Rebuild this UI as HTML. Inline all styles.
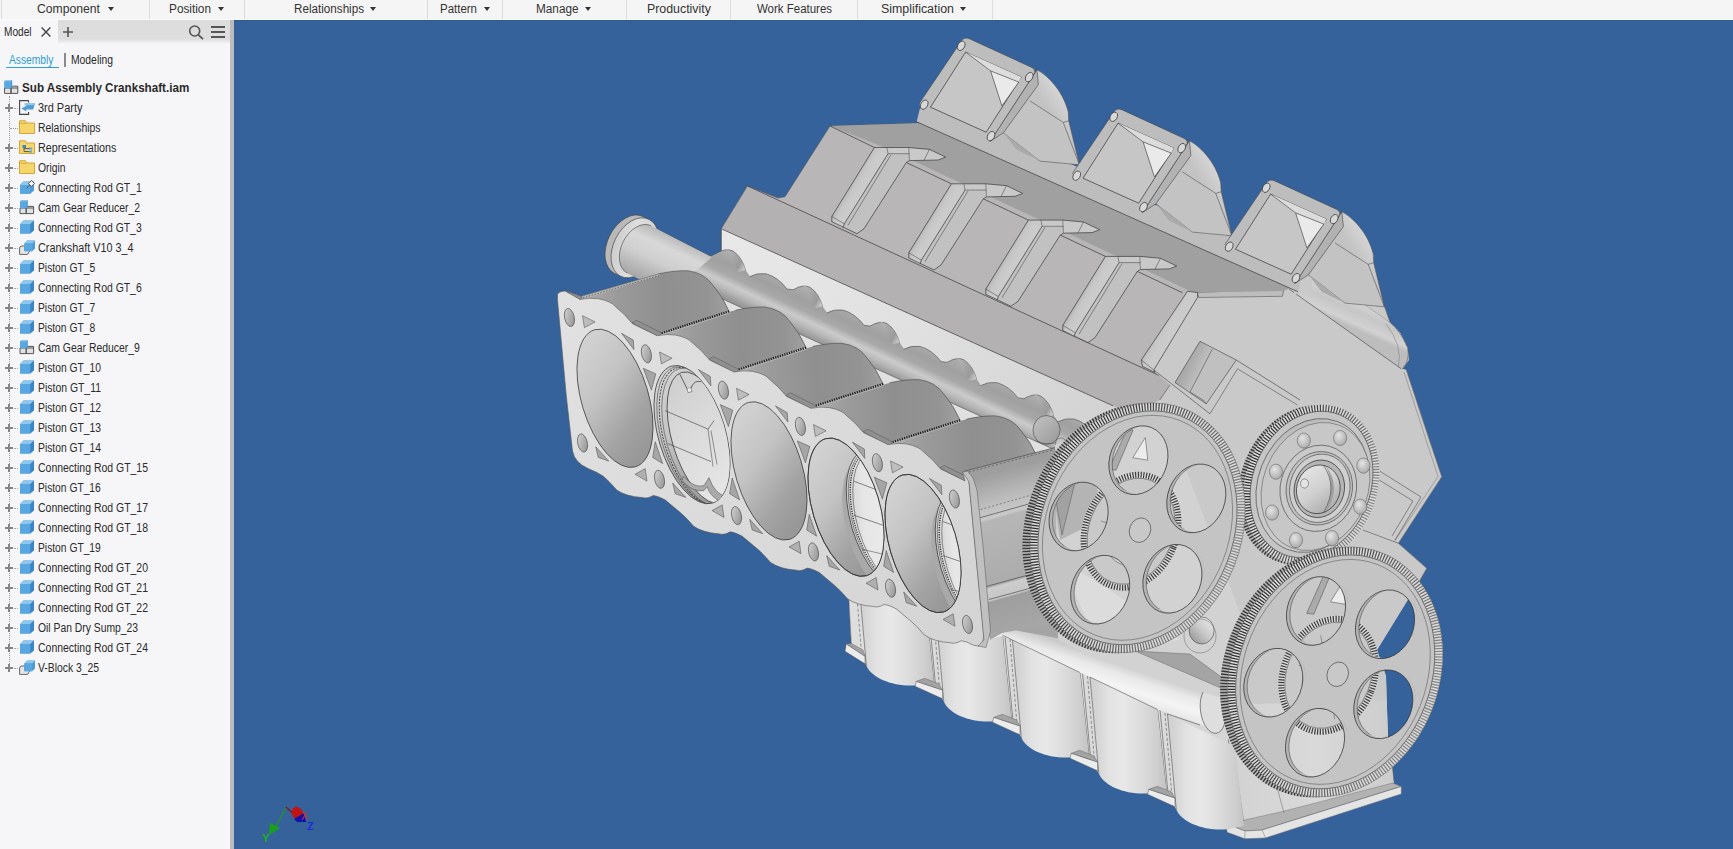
<!DOCTYPE html>
<html><head><meta charset="utf-8">
<style>
html,body{margin:0;padding:0;}
body{width:1733px;height:849px;overflow:hidden;position:relative;background:#35629b;font-family:"Liberation Sans",sans-serif;color:#2a2a2a;}
#ribbon{position:absolute;left:0;top:0;width:1733px;height:19px;background:#f5f5f5;border-bottom:1px solid #fbfbfb;}
#ribbon .t{position:absolute;top:1.5px;font-size:12px;line-height:14px;color:#333;white-space:nowrap;transform-origin:0 50%;}
#ribbon .s{position:absolute;top:0;width:1px;height:19px;background:#dcdcdc;}
#ribbon .a{position:absolute;top:7px;width:0;height:0;border-left:3.8px solid transparent;border-right:3.8px solid transparent;border-top:4.2px solid #333;}
#panel{position:absolute;left:0;top:20px;width:230px;height:829px;background:#f6f6f8;}
#split{position:absolute;left:230px;top:20px;width:4px;height:829px;background:#bdbbbb;}
#tabbar{position:absolute;left:0;top:0;width:230px;height:23px;background:linear-gradient(#dcdcdc 0,#dedede 19px,#f0f0f2 23px);}
#tabm{position:absolute;left:0;top:0;width:58px;height:24px;background:#f6f6f8;}
.b{font-weight:bold;color:#111;}
.lbl{position:absolute;white-space:nowrap;font-size:12px;line-height:14px;color:#2a2a2a;transform-origin:0 50%;}
#view{position:absolute;left:234px;top:20px;width:1499px;height:829px;overflow:hidden;box-shadow:inset 0 1px 0 #2f5b93;}
</style></head><body>
<div id="ribbon">
<div class="s" style="left:1px"></div><div class="s" style="left:149px"></div><div class="s" style="left:244px"></div><div class="s" style="left:427px"></div><div class="s" style="left:502px"></div><div class="s" style="left:626px"></div><div class="s" style="left:730px"></div><div class="s" style="left:857px"></div><div class="s" style="left:992px"></div>
<span class="t" id="r1" style="left:37px;transform:scaleX(1.015)">Component</span><i class="a" style="left:107.5px"></i>
<span class="t" id="r2" style="left:169px;transform:scaleX(0.984)">Position</span><i class="a" style="left:218px"></i>
<span class="t" id="r3" style="left:294px;transform:scaleX(0.972)">Relationships</span><i class="a" style="left:370px"></i>
<span class="t" id="r4" style="left:440px;transform:scaleX(0.956)">Pattern</span><i class="a" style="left:484px"></i>
<span class="t" id="r5" style="left:536px;transform:scaleX(0.982)">Manage</span><i class="a" style="left:585px"></i>
<span class="t" id="r6" style="left:647px;transform:scaleX(1.03)">Productivity</span>
<span class="t" id="r7" style="left:757px;transform:scaleX(0.956)">Work Features</span>
<span class="t" id="r8" style="left:881px;transform:scaleX(1.032)">Simplification</span><i class="a" style="left:960px"></i>
</div>
<div id="panel">
<div id="tabbar"></div><div id="tabm"></div>
<span class="lbl" id="pm" style="left:3.5px;top:5px;transform:scaleX(0.841)">Model</span>
<svg style="position:absolute;left:40px;top:6px" width="12" height="12" viewBox="0 0 12 12"><path d="M1.6 1.6L10.4 10.4M10.4 1.6L1.6 10.4" stroke="#444" stroke-width="1.4" fill="none"/></svg>
<svg style="position:absolute;left:62px;top:6px" width="12" height="12" viewBox="0 0 12 12"><path d="M6 1V11M1 6H11" stroke="#555" stroke-width="1.6" fill="none"/></svg>
<svg style="position:absolute;left:187px;top:3px" width="18" height="18" viewBox="0 0 18 18"><circle cx="7.7" cy="8" r="5" fill="none" stroke="#555" stroke-width="1.6"/><path d="M11.4 11.8L16 16.2" stroke="#555" stroke-width="1.8"/></svg>
<div style="position:absolute;left:211px;top:6px;width:14px;height:2px;background:#555"></div>
<div style="position:absolute;left:211px;top:11px;width:14px;height:2px;background:#555"></div>
<div style="position:absolute;left:211px;top:16px;width:14px;height:2px;background:#555"></div>
<span class="lbl" id="pa" style="left:9px;top:33px;color:#2d9fd3;transform:scaleX(0.852)">Assembly</span>
<div style="position:absolute;left:6px;top:47px;width:53px;height:1px;background:#2d9fd3"></div>
<div style="position:absolute;left:64px;top:33px;width:1.5px;height:14px;background:#8a8a8a"></div>
<span class="lbl" id="pmo" style="left:71.3px;top:33px;transform:scaleX(0.862)">Modeling</span>
<div style="position:absolute;left:9px;top:76px;width:0;height:568px;border-left:1px dotted #9a9a9a"></div>
<svg style="position:absolute;left:4px;top:60px" width="15" height="15" viewBox="0 0 15 15"><path d="M0.6 8H7V13.4H0.6Z M7 8H13.8V13.4H7Z M7 8 L8.4 6.2H13.8V8" fill="#e2e2e2" stroke="#555" stroke-width="1"/><path d="M0.4 1.4 L1.8 0H8.2V6.8L6.8 8.2H0.4Z" fill="#4e9bd6"/><path d="M0.4 1.4H6.8V8.2H0.4Z" fill="#5aa8e0"/><path d="M0.4 1.4L1.8 0H8.2L6.8 1.4Z" fill="#8ec6ee"/></svg>
<span class="lbl b" id="t0" style="left:22.2px;top:61px;transform:scaleX(0.9711)">Sub Assembly Crankshaft.iam</span>
<div style="position:absolute;left:5px;top:87px;width:8px;height:2px;background:#858585"></div><div style="position:absolute;left:8px;top:84px;width:2px;height:8px;background:#858585"></div>
<div style="position:absolute;left:14px;top:88px;width:4px;height:0;border-top:1px dotted #aaa"></div>
<svg style="position:absolute;left:19px;top:80px" width="17" height="15" viewBox="0 0 17 15"><path d="M9.6 0.6H0.6V14.4H9.6V12M9.6 0.6V2.6" fill="none" stroke="#444" stroke-width="1.1"/><path d="M5.5 3.4H16L14.2 9.6H7.2L7.4 11.6L2.4 8.6L7.8 5.6L7.6 7.4H8.2Z" fill="#4e9bd6"/><path d="M5.8 3.4H16L15.4 5.2H5.2Z" fill="#8ec6ee"/></svg>
<span class="lbl" id="t1" style="left:37.6px;top:81px;transform:scaleX(0.9119)">3rd Party</span>
<div style="position:absolute;left:10px;top:108px;width:8px;height:0;border-top:1px dotted #9a9a9a"></div>
<svg style="position:absolute;left:19px;top:100px" width="17" height="15" viewBox="0 0 17 15"><path d="M0.5 0.8H6.5L7.5 3H15.5V13.5H0.5Z" fill="#f6d56a" stroke="#d2a63a" stroke-width="1"/><path d="M0.5 3.4H7.5" stroke="#d2a63a" stroke-width="0.8" fill="none"/></svg>
<span class="lbl" id="t2" style="left:37.6px;top:101px;transform:scaleX(0.8675)">Relationships</span>
<div style="position:absolute;left:5px;top:127px;width:8px;height:2px;background:#858585"></div><div style="position:absolute;left:8px;top:124px;width:2px;height:8px;background:#858585"></div>
<div style="position:absolute;left:14px;top:128px;width:4px;height:0;border-top:1px dotted #aaa"></div>
<svg style="position:absolute;left:19px;top:120px" width="17" height="15" viewBox="0 0 17 15"><path d="M0.5 0.8H6.5L7.5 3H15.5V13.5H0.5Z" fill="#f6d56a" stroke="#d2a63a" stroke-width="1"/><rect x="3.5" y="5" width="3.5" height="3" fill="#3c86c8"/><rect x="10" y="7.6" width="3" height="2" fill="#5aa3dc"/><rect x="10" y="10.6" width="3" height="2" fill="#5aa3dc"/><path d="M5 8V11.6H10M5 8.6H10" stroke="#555" stroke-width="1" fill="none"/></svg>
<span class="lbl" id="t3" style="left:37.6px;top:121px;transform:scaleX(0.8983)">Representations</span>
<div style="position:absolute;left:5px;top:147px;width:8px;height:2px;background:#858585"></div><div style="position:absolute;left:8px;top:144px;width:2px;height:8px;background:#858585"></div>
<div style="position:absolute;left:14px;top:148px;width:4px;height:0;border-top:1px dotted #aaa"></div>
<svg style="position:absolute;left:19px;top:140px" width="17" height="15" viewBox="0 0 17 15"><path d="M0.5 0.8H6.5L7.5 3H15.5V13.5H0.5Z" fill="#f6d56a" stroke="#d2a63a" stroke-width="1"/><path d="M0.5 3.4H7.5" stroke="#d2a63a" stroke-width="0.8" fill="none"/></svg>
<span class="lbl" id="t4" style="left:37.6px;top:141px;transform:scaleX(0.8621)">Origin</span>
<div style="position:absolute;left:5px;top:167px;width:8px;height:2px;background:#858585"></div><div style="position:absolute;left:8px;top:164px;width:2px;height:8px;background:#858585"></div>
<div style="position:absolute;left:14px;top:168px;width:4px;height:0;border-top:1px dotted #aaa"></div>
<svg style="position:absolute;left:19px;top:160px" width="17" height="15" viewBox="0 0 17 15"><path d="M1 5 L4.4 1.6 L15 1.6 L15 10.4 L11.2 13.8 L1 13.8Z" fill="#4e9bd6"/><path d="M1 5 L4.4 1.6 L15 1.6 L11.2 5Z" fill="#8ec6ee"/><path d="M1 5H11.2V13.8H1Z" fill="#58a7e0"/><path d="M7.4 8.4 L10.6 5.2 M9.4 3.6 L12.4 0.4 L15.6 3.4 L12.6 6.6 Z" fill="#f4f4f4" stroke="#555" stroke-width="1"/></svg>
<span class="lbl" id="t5" style="left:37.6px;top:161px;transform:scaleX(0.8685)">Connecting Rod GT_1</span>
<div style="position:absolute;left:5px;top:187px;width:8px;height:2px;background:#858585"></div><div style="position:absolute;left:8px;top:184px;width:2px;height:8px;background:#858585"></div>
<div style="position:absolute;left:14px;top:188px;width:4px;height:0;border-top:1px dotted #aaa"></div>
<svg style="position:absolute;left:19px;top:180px" width="17" height="15" viewBox="0 0 17 15"><path d="M1 8H7.2V13.6H1Z M7.2 8 H14.6V13.6H7.2Z M7.2 8 L8.6 6.4 H14.6 V8" fill="#e2e2e2" stroke="#555" stroke-width="1"/><path d="M1 1.4 L2.4 0.2 H8.8 V7 L7.4 8.2 H1Z" fill="#4e9bd6"/><path d="M1 1.6H7.4V8.2H1Z" fill="#5aa8e0"/><path d="M1 1.6 L2.4 0.2H8.8L7.4 1.6Z" fill="#8ec6ee"/></svg>
<span class="lbl" id="t6" style="left:37.6px;top:181px;transform:scaleX(0.8697)">Cam Gear Reducer_2</span>
<div style="position:absolute;left:5px;top:207px;width:8px;height:2px;background:#858585"></div><div style="position:absolute;left:8px;top:204px;width:2px;height:8px;background:#858585"></div>
<div style="position:absolute;left:14px;top:208px;width:4px;height:0;border-top:1px dotted #aaa"></div>
<svg style="position:absolute;left:19px;top:200px" width="17" height="15" viewBox="0 0 17 15"><path d="M1 4.2 L4.6 0.6 L15 0.6 L15 10.2 L11.2 13.6 L1 13.6Z" fill="#4e9bd6"/><path d="M1 4.2 L4.6 0.6 L15 0.6 L11.2 4.2Z" fill="#8ec6ee"/><path d="M11.2 4.2 L15 0.6 L15 10.2 L11.2 13.6Z" fill="#3985c6"/><path d="M1 4.2H11.2V13.6H1Z" fill="#58a7e0"/></svg>
<span class="lbl" id="t7" style="left:37.6px;top:201px;transform:scaleX(0.8685)">Connecting Rod GT_3</span>
<div style="position:absolute;left:5px;top:227px;width:8px;height:2px;background:#858585"></div><div style="position:absolute;left:8px;top:224px;width:2px;height:8px;background:#858585"></div>
<div style="position:absolute;left:14px;top:228px;width:4px;height:0;border-top:1px dotted #aaa"></div>
<svg style="position:absolute;left:19px;top:220px" width="17" height="15" viewBox="0 0 17 15"><path d="M0.6 8.2 Q0.6 6 3 6 H6 V10.5 H11 L8.6 14.4 H0.6Z" fill="#e6e6e6" stroke="#666" stroke-width="1"/><path d="M5.4 3.4 L8.2 0.6 L16 0.6 L16 8.4 L13.2 11.2 L5.4 11.2Z" fill="#4e9bd6"/><path d="M5.4 3.4 L8.2 0.6 L16 0.6 L13.2 3.4Z" fill="#8ec6ee"/><path d="M5.4 3.4H13.2V11.2H5.4Z" fill="#58a7e0"/></svg>
<span class="lbl" id="t8" style="left:37.6px;top:221px;transform:scaleX(0.8993)">Crankshaft V10 3_4</span>
<div style="position:absolute;left:5px;top:247px;width:8px;height:2px;background:#858585"></div><div style="position:absolute;left:8px;top:244px;width:2px;height:8px;background:#858585"></div>
<div style="position:absolute;left:14px;top:248px;width:4px;height:0;border-top:1px dotted #aaa"></div>
<svg style="position:absolute;left:19px;top:240px" width="17" height="15" viewBox="0 0 17 15"><path d="M1 4.2 L4.6 0.6 L15 0.6 L15 10.2 L11.2 13.6 L1 13.6Z" fill="#4e9bd6"/><path d="M1 4.2 L4.6 0.6 L15 0.6 L11.2 4.2Z" fill="#8ec6ee"/><path d="M11.2 4.2 L15 0.6 L15 10.2 L11.2 13.6Z" fill="#3985c6"/><path d="M1 4.2H11.2V13.6H1Z" fill="#58a7e0"/></svg>
<span class="lbl" id="t9" style="left:37.6px;top:241px;transform:scaleX(0.8560)">Piston GT_5</span>
<div style="position:absolute;left:5px;top:267px;width:8px;height:2px;background:#858585"></div><div style="position:absolute;left:8px;top:264px;width:2px;height:8px;background:#858585"></div>
<div style="position:absolute;left:14px;top:268px;width:4px;height:0;border-top:1px dotted #aaa"></div>
<svg style="position:absolute;left:19px;top:260px" width="17" height="15" viewBox="0 0 17 15"><path d="M1 4.2 L4.6 0.6 L15 0.6 L15 10.2 L11.2 13.6 L1 13.6Z" fill="#4e9bd6"/><path d="M1 4.2 L4.6 0.6 L15 0.6 L11.2 4.2Z" fill="#8ec6ee"/><path d="M11.2 4.2 L15 0.6 L15 10.2 L11.2 13.6Z" fill="#3985c6"/><path d="M1 4.2H11.2V13.6H1Z" fill="#58a7e0"/></svg>
<span class="lbl" id="t10" style="left:37.6px;top:261px;transform:scaleX(0.8685)">Connecting Rod GT_6</span>
<div style="position:absolute;left:5px;top:287px;width:8px;height:2px;background:#858585"></div><div style="position:absolute;left:8px;top:284px;width:2px;height:8px;background:#858585"></div>
<div style="position:absolute;left:14px;top:288px;width:4px;height:0;border-top:1px dotted #aaa"></div>
<svg style="position:absolute;left:19px;top:280px" width="17" height="15" viewBox="0 0 17 15"><path d="M1 4.2 L4.6 0.6 L15 0.6 L15 10.2 L11.2 13.6 L1 13.6Z" fill="#4e9bd6"/><path d="M1 4.2 L4.6 0.6 L15 0.6 L11.2 4.2Z" fill="#8ec6ee"/><path d="M11.2 4.2 L15 0.6 L15 10.2 L11.2 13.6Z" fill="#3985c6"/><path d="M1 4.2H11.2V13.6H1Z" fill="#58a7e0"/></svg>
<span class="lbl" id="t11" style="left:37.6px;top:281px;transform:scaleX(0.8560)">Piston GT_7</span>
<div style="position:absolute;left:5px;top:307px;width:8px;height:2px;background:#858585"></div><div style="position:absolute;left:8px;top:304px;width:2px;height:8px;background:#858585"></div>
<div style="position:absolute;left:14px;top:308px;width:4px;height:0;border-top:1px dotted #aaa"></div>
<svg style="position:absolute;left:19px;top:300px" width="17" height="15" viewBox="0 0 17 15"><path d="M1 4.2 L4.6 0.6 L15 0.6 L15 10.2 L11.2 13.6 L1 13.6Z" fill="#4e9bd6"/><path d="M1 4.2 L4.6 0.6 L15 0.6 L11.2 4.2Z" fill="#8ec6ee"/><path d="M11.2 4.2 L15 0.6 L15 10.2 L11.2 13.6Z" fill="#3985c6"/><path d="M1 4.2H11.2V13.6H1Z" fill="#58a7e0"/></svg>
<span class="lbl" id="t12" style="left:37.6px;top:301px;transform:scaleX(0.8560)">Piston GT_8</span>
<div style="position:absolute;left:5px;top:327px;width:8px;height:2px;background:#858585"></div><div style="position:absolute;left:8px;top:324px;width:2px;height:8px;background:#858585"></div>
<div style="position:absolute;left:14px;top:328px;width:4px;height:0;border-top:1px dotted #aaa"></div>
<svg style="position:absolute;left:19px;top:320px" width="17" height="15" viewBox="0 0 17 15"><path d="M1 8H7.2V13.6H1Z M7.2 8 H14.6V13.6H7.2Z M7.2 8 L8.6 6.4 H14.6 V8" fill="#e2e2e2" stroke="#555" stroke-width="1"/><path d="M1 1.4 L2.4 0.2 H8.8 V7 L7.4 8.2 H1Z" fill="#4e9bd6"/><path d="M1 1.6H7.4V8.2H1Z" fill="#5aa8e0"/><path d="M1 1.6 L2.4 0.2H8.8L7.4 1.6Z" fill="#8ec6ee"/></svg>
<span class="lbl" id="t13" style="left:37.6px;top:321px;transform:scaleX(0.8672)">Cam Gear Reducer_9</span>
<div style="position:absolute;left:5px;top:347px;width:8px;height:2px;background:#858585"></div><div style="position:absolute;left:8px;top:344px;width:2px;height:8px;background:#858585"></div>
<div style="position:absolute;left:14px;top:348px;width:4px;height:0;border-top:1px dotted #aaa"></div>
<svg style="position:absolute;left:19px;top:340px" width="17" height="15" viewBox="0 0 17 15"><path d="M1 4.2 L4.6 0.6 L15 0.6 L15 10.2 L11.2 13.6 L1 13.6Z" fill="#4e9bd6"/><path d="M1 4.2 L4.6 0.6 L15 0.6 L11.2 4.2Z" fill="#8ec6ee"/><path d="M11.2 4.2 L15 0.6 L15 10.2 L11.2 13.6Z" fill="#3985c6"/><path d="M1 4.2H11.2V13.6H1Z" fill="#58a7e0"/></svg>
<span class="lbl" id="t14" style="left:37.6px;top:341px;transform:scaleX(0.8586)">Piston GT_10</span>
<div style="position:absolute;left:5px;top:367px;width:8px;height:2px;background:#858585"></div><div style="position:absolute;left:8px;top:364px;width:2px;height:8px;background:#858585"></div>
<div style="position:absolute;left:14px;top:368px;width:4px;height:0;border-top:1px dotted #aaa"></div>
<svg style="position:absolute;left:19px;top:360px" width="17" height="15" viewBox="0 0 17 15"><path d="M1 4.2 L4.6 0.6 L15 0.6 L15 10.2 L11.2 13.6 L1 13.6Z" fill="#4e9bd6"/><path d="M1 4.2 L4.6 0.6 L15 0.6 L11.2 4.2Z" fill="#8ec6ee"/><path d="M11.2 4.2 L15 0.6 L15 10.2 L11.2 13.6Z" fill="#3985c6"/><path d="M1 4.2H11.2V13.6H1Z" fill="#58a7e0"/></svg>
<span class="lbl" id="t15" style="left:37.6px;top:361px;transform:scaleX(0.8692)">Piston GT_11</span>
<div style="position:absolute;left:5px;top:387px;width:8px;height:2px;background:#858585"></div><div style="position:absolute;left:8px;top:384px;width:2px;height:8px;background:#858585"></div>
<div style="position:absolute;left:14px;top:388px;width:4px;height:0;border-top:1px dotted #aaa"></div>
<svg style="position:absolute;left:19px;top:380px" width="17" height="15" viewBox="0 0 17 15"><path d="M1 4.2 L4.6 0.6 L15 0.6 L15 10.2 L11.2 13.6 L1 13.6Z" fill="#4e9bd6"/><path d="M1 4.2 L4.6 0.6 L15 0.6 L11.2 4.2Z" fill="#8ec6ee"/><path d="M11.2 4.2 L15 0.6 L15 10.2 L11.2 13.6Z" fill="#3985c6"/><path d="M1 4.2H11.2V13.6H1Z" fill="#58a7e0"/></svg>
<span class="lbl" id="t16" style="left:37.6px;top:381px;transform:scaleX(0.8600)">Piston GT_12</span>
<div style="position:absolute;left:5px;top:407px;width:8px;height:2px;background:#858585"></div><div style="position:absolute;left:8px;top:404px;width:2px;height:8px;background:#858585"></div>
<div style="position:absolute;left:14px;top:408px;width:4px;height:0;border-top:1px dotted #aaa"></div>
<svg style="position:absolute;left:19px;top:400px" width="17" height="15" viewBox="0 0 17 15"><path d="M1 4.2 L4.6 0.6 L15 0.6 L15 10.2 L11.2 13.6 L1 13.6Z" fill="#4e9bd6"/><path d="M1 4.2 L4.6 0.6 L15 0.6 L11.2 4.2Z" fill="#8ec6ee"/><path d="M11.2 4.2 L15 0.6 L15 10.2 L11.2 13.6Z" fill="#3985c6"/><path d="M1 4.2H11.2V13.6H1Z" fill="#58a7e0"/></svg>
<span class="lbl" id="t17" style="left:37.6px;top:401px;transform:scaleX(0.8586)">Piston GT_13</span>
<div style="position:absolute;left:5px;top:427px;width:8px;height:2px;background:#858585"></div><div style="position:absolute;left:8px;top:424px;width:2px;height:8px;background:#858585"></div>
<div style="position:absolute;left:14px;top:428px;width:4px;height:0;border-top:1px dotted #aaa"></div>
<svg style="position:absolute;left:19px;top:420px" width="17" height="15" viewBox="0 0 17 15"><path d="M1 4.2 L4.6 0.6 L15 0.6 L15 10.2 L11.2 13.6 L1 13.6Z" fill="#4e9bd6"/><path d="M1 4.2 L4.6 0.6 L15 0.6 L11.2 4.2Z" fill="#8ec6ee"/><path d="M11.2 4.2 L15 0.6 L15 10.2 L11.2 13.6Z" fill="#3985c6"/><path d="M1 4.2H11.2V13.6H1Z" fill="#58a7e0"/></svg>
<span class="lbl" id="t18" style="left:37.6px;top:421px;transform:scaleX(0.8600)">Piston GT_14</span>
<div style="position:absolute;left:5px;top:447px;width:8px;height:2px;background:#858585"></div><div style="position:absolute;left:8px;top:444px;width:2px;height:8px;background:#858585"></div>
<div style="position:absolute;left:14px;top:448px;width:4px;height:0;border-top:1px dotted #aaa"></div>
<svg style="position:absolute;left:19px;top:440px" width="17" height="15" viewBox="0 0 17 15"><path d="M1 4.2 L4.6 0.6 L15 0.6 L15 10.2 L11.2 13.6 L1 13.6Z" fill="#4e9bd6"/><path d="M1 4.2 L4.6 0.6 L15 0.6 L11.2 4.2Z" fill="#8ec6ee"/><path d="M11.2 4.2 L15 0.6 L15 10.2 L11.2 13.6Z" fill="#3985c6"/><path d="M1 4.2H11.2V13.6H1Z" fill="#58a7e0"/></svg>
<span class="lbl" id="t19" style="left:37.6px;top:441px;transform:scaleX(0.8725)">Connecting Rod GT_15</span>
<div style="position:absolute;left:5px;top:467px;width:8px;height:2px;background:#858585"></div><div style="position:absolute;left:8px;top:464px;width:2px;height:8px;background:#858585"></div>
<div style="position:absolute;left:14px;top:468px;width:4px;height:0;border-top:1px dotted #aaa"></div>
<svg style="position:absolute;left:19px;top:460px" width="17" height="15" viewBox="0 0 17 15"><path d="M1 4.2 L4.6 0.6 L15 0.6 L15 10.2 L11.2 13.6 L1 13.6Z" fill="#4e9bd6"/><path d="M1 4.2 L4.6 0.6 L15 0.6 L11.2 4.2Z" fill="#8ec6ee"/><path d="M11.2 4.2 L15 0.6 L15 10.2 L11.2 13.6Z" fill="#3985c6"/><path d="M1 4.2H11.2V13.6H1Z" fill="#58a7e0"/></svg>
<span class="lbl" id="t20" style="left:37.6px;top:461px;transform:scaleX(0.8559)">Piston GT_16</span>
<div style="position:absolute;left:5px;top:487px;width:8px;height:2px;background:#858585"></div><div style="position:absolute;left:8px;top:484px;width:2px;height:8px;background:#858585"></div>
<div style="position:absolute;left:14px;top:488px;width:4px;height:0;border-top:1px dotted #aaa"></div>
<svg style="position:absolute;left:19px;top:480px" width="17" height="15" viewBox="0 0 17 15"><path d="M1 4.2 L4.6 0.6 L15 0.6 L15 10.2 L11.2 13.6 L1 13.6Z" fill="#4e9bd6"/><path d="M1 4.2 L4.6 0.6 L15 0.6 L11.2 4.2Z" fill="#8ec6ee"/><path d="M11.2 4.2 L15 0.6 L15 10.2 L11.2 13.6Z" fill="#3985c6"/><path d="M1 4.2H11.2V13.6H1Z" fill="#58a7e0"/></svg>
<span class="lbl" id="t21" style="left:37.6px;top:481px;transform:scaleX(0.8725)">Connecting Rod GT_17</span>
<div style="position:absolute;left:5px;top:507px;width:8px;height:2px;background:#858585"></div><div style="position:absolute;left:8px;top:504px;width:2px;height:8px;background:#858585"></div>
<div style="position:absolute;left:14px;top:508px;width:4px;height:0;border-top:1px dotted #aaa"></div>
<svg style="position:absolute;left:19px;top:500px" width="17" height="15" viewBox="0 0 17 15"><path d="M1 4.2 L4.6 0.6 L15 0.6 L15 10.2 L11.2 13.6 L1 13.6Z" fill="#4e9bd6"/><path d="M1 4.2 L4.6 0.6 L15 0.6 L11.2 4.2Z" fill="#8ec6ee"/><path d="M11.2 4.2 L15 0.6 L15 10.2 L11.2 13.6Z" fill="#3985c6"/><path d="M1 4.2H11.2V13.6H1Z" fill="#58a7e0"/></svg>
<span class="lbl" id="t22" style="left:37.6px;top:501px;transform:scaleX(0.8725)">Connecting Rod GT_18</span>
<div style="position:absolute;left:5px;top:527px;width:8px;height:2px;background:#858585"></div><div style="position:absolute;left:8px;top:524px;width:2px;height:8px;background:#858585"></div>
<div style="position:absolute;left:14px;top:528px;width:4px;height:0;border-top:1px dotted #aaa"></div>
<svg style="position:absolute;left:19px;top:520px" width="17" height="15" viewBox="0 0 17 15"><path d="M1 4.2 L4.6 0.6 L15 0.6 L15 10.2 L11.2 13.6 L1 13.6Z" fill="#4e9bd6"/><path d="M1 4.2 L4.6 0.6 L15 0.6 L11.2 4.2Z" fill="#8ec6ee"/><path d="M11.2 4.2 L15 0.6 L15 10.2 L11.2 13.6Z" fill="#3985c6"/><path d="M1 4.2H11.2V13.6H1Z" fill="#58a7e0"/></svg>
<span class="lbl" id="t23" style="left:37.6px;top:521px;transform:scaleX(0.8559)">Piston GT_19</span>
<div style="position:absolute;left:5px;top:547px;width:8px;height:2px;background:#858585"></div><div style="position:absolute;left:8px;top:544px;width:2px;height:8px;background:#858585"></div>
<div style="position:absolute;left:14px;top:548px;width:4px;height:0;border-top:1px dotted #aaa"></div>
<svg style="position:absolute;left:19px;top:540px" width="17" height="15" viewBox="0 0 17 15"><path d="M1 4.2 L4.6 0.6 L15 0.6 L15 10.2 L11.2 13.6 L1 13.6Z" fill="#4e9bd6"/><path d="M1 4.2 L4.6 0.6 L15 0.6 L11.2 4.2Z" fill="#8ec6ee"/><path d="M11.2 4.2 L15 0.6 L15 10.2 L11.2 13.6Z" fill="#3985c6"/><path d="M1 4.2H11.2V13.6H1Z" fill="#58a7e0"/></svg>
<span class="lbl" id="t24" style="left:37.6px;top:541px;transform:scaleX(0.8725)">Connecting Rod GT_20</span>
<div style="position:absolute;left:5px;top:567px;width:8px;height:2px;background:#858585"></div><div style="position:absolute;left:8px;top:564px;width:2px;height:8px;background:#858585"></div>
<div style="position:absolute;left:14px;top:568px;width:4px;height:0;border-top:1px dotted #aaa"></div>
<svg style="position:absolute;left:19px;top:560px" width="17" height="15" viewBox="0 0 17 15"><path d="M1 4.2 L4.6 0.6 L15 0.6 L15 10.2 L11.2 13.6 L1 13.6Z" fill="#4e9bd6"/><path d="M1 4.2 L4.6 0.6 L15 0.6 L11.2 4.2Z" fill="#8ec6ee"/><path d="M11.2 4.2 L15 0.6 L15 10.2 L11.2 13.6Z" fill="#3985c6"/><path d="M1 4.2H11.2V13.6H1Z" fill="#58a7e0"/></svg>
<span class="lbl" id="t25" style="left:37.6px;top:561px;transform:scaleX(0.8725)">Connecting Rod GT_21</span>
<div style="position:absolute;left:5px;top:587px;width:8px;height:2px;background:#858585"></div><div style="position:absolute;left:8px;top:584px;width:2px;height:8px;background:#858585"></div>
<div style="position:absolute;left:14px;top:588px;width:4px;height:0;border-top:1px dotted #aaa"></div>
<svg style="position:absolute;left:19px;top:580px" width="17" height="15" viewBox="0 0 17 15"><path d="M1 4.2 L4.6 0.6 L15 0.6 L15 10.2 L11.2 13.6 L1 13.6Z" fill="#4e9bd6"/><path d="M1 4.2 L4.6 0.6 L15 0.6 L11.2 4.2Z" fill="#8ec6ee"/><path d="M11.2 4.2 L15 0.6 L15 10.2 L11.2 13.6Z" fill="#3985c6"/><path d="M1 4.2H11.2V13.6H1Z" fill="#58a7e0"/></svg>
<span class="lbl" id="t26" style="left:37.6px;top:581px;transform:scaleX(0.8725)">Connecting Rod GT_22</span>
<div style="position:absolute;left:5px;top:607px;width:8px;height:2px;background:#858585"></div><div style="position:absolute;left:8px;top:604px;width:2px;height:8px;background:#858585"></div>
<div style="position:absolute;left:14px;top:608px;width:4px;height:0;border-top:1px dotted #aaa"></div>
<svg style="position:absolute;left:19px;top:600px" width="17" height="15" viewBox="0 0 17 15"><path d="M1 4.2 L4.6 0.6 L15 0.6 L15 10.2 L11.2 13.6 L1 13.6Z" fill="#4e9bd6"/><path d="M1 4.2 L4.6 0.6 L15 0.6 L11.2 4.2Z" fill="#8ec6ee"/><path d="M11.2 4.2 L15 0.6 L15 10.2 L11.2 13.6Z" fill="#3985c6"/><path d="M1 4.2H11.2V13.6H1Z" fill="#58a7e0"/></svg>
<span class="lbl" id="t27" style="left:37.6px;top:601px;transform:scaleX(0.8625)">Oil Pan Dry Sump_23</span>
<div style="position:absolute;left:5px;top:627px;width:8px;height:2px;background:#858585"></div><div style="position:absolute;left:8px;top:624px;width:2px;height:8px;background:#858585"></div>
<div style="position:absolute;left:14px;top:628px;width:4px;height:0;border-top:1px dotted #aaa"></div>
<svg style="position:absolute;left:19px;top:620px" width="17" height="15" viewBox="0 0 17 15"><path d="M1 4.2 L4.6 0.6 L15 0.6 L15 10.2 L11.2 13.6 L1 13.6Z" fill="#4e9bd6"/><path d="M1 4.2 L4.6 0.6 L15 0.6 L11.2 4.2Z" fill="#8ec6ee"/><path d="M11.2 4.2 L15 0.6 L15 10.2 L11.2 13.6Z" fill="#3985c6"/><path d="M1 4.2H11.2V13.6H1Z" fill="#58a7e0"/></svg>
<span class="lbl" id="t28" style="left:37.6px;top:621px;transform:scaleX(0.8725)">Connecting Rod GT_24</span>
<div style="position:absolute;left:5px;top:647px;width:8px;height:2px;background:#858585"></div><div style="position:absolute;left:8px;top:644px;width:2px;height:8px;background:#858585"></div>
<div style="position:absolute;left:14px;top:648px;width:4px;height:0;border-top:1px dotted #aaa"></div>
<svg style="position:absolute;left:19px;top:640px" width="17" height="15" viewBox="0 0 17 15"><path d="M0.6 8.2 Q0.6 6 3 6 H6 V10.5 H11 L8.6 14.4 H0.6Z" fill="#e6e6e6" stroke="#666" stroke-width="1"/><path d="M5.4 3.4 L8.2 0.6 L16 0.6 L16 8.4 L13.2 11.2 L5.4 11.2Z" fill="#4e9bd6"/><path d="M5.4 3.4 L8.2 0.6 L16 0.6 L13.2 3.4Z" fill="#8ec6ee"/><path d="M5.4 3.4H13.2V11.2H5.4Z" fill="#58a7e0"/></svg>
<span class="lbl" id="t29" style="left:37.6px;top:641px;transform:scaleX(0.8640)">V-Block 3_25</span>
</div>
<div id="split"></div>
<div id="view">
<svg style="position:absolute;left:0;top:0" width="1499" height="829" viewBox="234 20 1499 829" shape-rendering="geometricPrecision"><defs><linearGradient id="lstrip" gradientUnits="userSpaceOnUse" x1="721" y1="240" x2="1110" y2="420"><stop offset="0" stop-color="#e8e8e8"/><stop offset="0.5" stop-color="#e0e0e0"/><stop offset="1" stop-color="#d2d2d2"/></linearGradient><linearGradient id="rdg" gradientUnits="userSpaceOnUse" x1="1345" y1="285" x2="1330" y2="318"><stop offset="0" stop-color="#b9b9b9"/><stop offset="0.2" stop-color="#d6d6d6"/><stop offset="0.55" stop-color="#c6c6c6"/><stop offset="0.85" stop-color="#d2d2d2"/><stop offset="1" stop-color="#bdbdbd"/></linearGradient><linearGradient id="pkt" gradientUnits="userSpaceOnUse" x1="1190" y1="360" x2="1215" y2="372"><stop offset="0" stop-color="#a9a9a9"/><stop offset="0.5" stop-color="#bdbdbd"/><stop offset="1" stop-color="#c6c6c6"/></linearGradient><linearGradient id="slw1" gradientUnits="userSpaceOnUse" x1="844.4" y1="187.5" x2="856.4" y2="194.5"><stop offset="0" stop-color="#a8a8a8"/><stop offset="0.6" stop-color="#c6c6c6"/><stop offset="1" stop-color="#cbcbcb"/></linearGradient><linearGradient id="slw2" gradientUnits="userSpaceOnUse" x1="921.4" y1="223.8" x2="933.4" y2="230.8"><stop offset="0" stop-color="#a8a8a8"/><stop offset="0.6" stop-color="#c6c6c6"/><stop offset="1" stop-color="#cbcbcb"/></linearGradient><linearGradient id="slw3" gradientUnits="userSpaceOnUse" x1="998.4000000000001" y1="260.1" x2="1010.4000000000001" y2="267.1"><stop offset="0" stop-color="#a8a8a8"/><stop offset="0.6" stop-color="#c6c6c6"/><stop offset="1" stop-color="#cbcbcb"/></linearGradient><linearGradient id="slw4" gradientUnits="userSpaceOnUse" x1="1075.4" y1="296.4" x2="1087.4" y2="303.4"><stop offset="0" stop-color="#a8a8a8"/><stop offset="0.6" stop-color="#c6c6c6"/><stop offset="1" stop-color="#cbcbcb"/></linearGradient><linearGradient id="slw5" gradientUnits="userSpaceOnUse" x1="1160" y1="318" x2="1172" y2="325"><stop offset="0" stop-color="#a8a8a8"/><stop offset="0.6" stop-color="#c6c6c6"/><stop offset="1" stop-color="#cbcbcb"/></linearGradient><linearGradient id="rn1" gradientUnits="userSpaceOnUse" x1="1041.9" y1="99.8" x2="1068.9" y2="81.8"><stop offset="0" stop-color="#c3c3c3"/><stop offset="0.55" stop-color="#d4d4d4"/><stop offset="1" stop-color="#b8b8b8"/></linearGradient><linearGradient id="rn2" gradientUnits="userSpaceOnUse" x1="1194.4" y1="170.8" x2="1221.4" y2="152.8"><stop offset="0" stop-color="#c3c3c3"/><stop offset="0.55" stop-color="#d4d4d4"/><stop offset="1" stop-color="#b8b8b8"/></linearGradient><linearGradient id="rn3" gradientUnits="userSpaceOnUse" x1="1346.9" y1="241.8" x2="1373.9" y2="223.8"><stop offset="0" stop-color="#c3c3c3"/><stop offset="0.55" stop-color="#d4d4d4"/><stop offset="1" stop-color="#b8b8b8"/></linearGradient><linearGradient id="tubeg" gradientUnits="userSpaceOnUse" x1="704.3" y1="241" x2="684.7" y2="282.6"><stop offset="0" stop-color="#acacac"/><stop offset="0.25" stop-color="#a0a0a0"/><stop offset="0.45" stop-color="#a8a8a8"/><stop offset="0.62" stop-color="#cbcbcb"/><stop offset="0.75" stop-color="#b9b9b9"/><stop offset="0.9" stop-color="#9b9b9b"/><stop offset="1" stop-color="#8e8e8e"/></linearGradient><linearGradient id="pst0" gradientUnits="userSpaceOnUse" x1="728.0" y1="255.0" x2="746.0" y2="266.0"><stop offset="0" stop-color="#b0b0b0"/><stop offset="0.7" stop-color="#9a9a9a"/><stop offset="1" stop-color="#c8c8c8"/></linearGradient><linearGradient id="pst1" gradientUnits="userSpaceOnUse" x1="805.0" y1="291.3" x2="823.0" y2="302.3"><stop offset="0" stop-color="#b0b0b0"/><stop offset="0.7" stop-color="#9a9a9a"/><stop offset="1" stop-color="#c8c8c8"/></linearGradient><linearGradient id="pst2" gradientUnits="userSpaceOnUse" x1="882.0" y1="327.6" x2="900.0" y2="338.6"><stop offset="0" stop-color="#b0b0b0"/><stop offset="0.7" stop-color="#9a9a9a"/><stop offset="1" stop-color="#c8c8c8"/></linearGradient><linearGradient id="pst3" gradientUnits="userSpaceOnUse" x1="959.0" y1="363.9" x2="977.0" y2="374.9"><stop offset="0" stop-color="#b0b0b0"/><stop offset="0.7" stop-color="#9a9a9a"/><stop offset="1" stop-color="#c8c8c8"/></linearGradient><linearGradient id="pst4" gradientUnits="userSpaceOnUse" x1="1036.0" y1="400.2" x2="1054.0" y2="411.2"><stop offset="0" stop-color="#b0b0b0"/><stop offset="0.7" stop-color="#9a9a9a"/><stop offset="1" stop-color="#c8c8c8"/></linearGradient><linearGradient id="cend" gradientUnits="userSpaceOnUse" x1="1036" y1="420" x2="1058" y2="442"><stop offset="0" stop-color="#bdbdbd"/><stop offset="0.6" stop-color="#a9a9a9"/><stop offset="1" stop-color="#9a9a9a"/></linearGradient><linearGradient id="flg" gradientUnits="userSpaceOnUse" x1="606" y1="250" x2="655" y2="238"><stop offset="0" stop-color="#c6c6c6"/><stop offset="0.5" stop-color="#dedede"/><stop offset="1" stop-color="#d0d0d0"/></linearGradient><linearGradient id="tube2" gradientUnits="userSpaceOnUse" x1="655" y1="224" x2="630" y2="278"><stop offset="0" stop-color="#b0b0b0"/><stop offset="0.28" stop-color="#d8d8d8"/><stop offset="0.55" stop-color="#cfcfcf"/><stop offset="1" stop-color="#a0a0a0"/></linearGradient><linearGradient id="pfw" gradientUnits="userSpaceOnUse" x1="1230" y1="760" x2="1400" y2="760"><stop offset="0" stop-color="#d2d2d2"/><stop offset="0.5" stop-color="#d9d9d9"/><stop offset="1" stop-color="#cbcbcb"/></linearGradient><linearGradient id="pc1" gradientUnits="userSpaceOnUse" x1="862.3" y1="635.5" x2="933.8" y2="635.5"><stop offset="0" stop-color="#d2d2d2"/><stop offset="0.2" stop-color="#e2e2e2"/><stop offset="0.4" stop-color="#e8e8e8"/><stop offset="0.65" stop-color="#dcdcdc"/><stop offset="0.88" stop-color="#cecece"/><stop offset="1" stop-color="#c3c3c3"/></linearGradient><linearGradient id="pc2" gradientUnits="userSpaceOnUse" x1="939.8" y1="671.5" x2="1011.3" y2="671.5"><stop offset="0" stop-color="#d2d2d2"/><stop offset="0.2" stop-color="#e2e2e2"/><stop offset="0.4" stop-color="#e8e8e8"/><stop offset="0.65" stop-color="#dcdcdc"/><stop offset="0.88" stop-color="#cecece"/><stop offset="1" stop-color="#c3c3c3"/></linearGradient><linearGradient id="pc3" gradientUnits="userSpaceOnUse" x1="1017.3" y1="707.5" x2="1088.8" y2="707.5"><stop offset="0" stop-color="#d2d2d2"/><stop offset="0.2" stop-color="#e2e2e2"/><stop offset="0.4" stop-color="#e8e8e8"/><stop offset="0.65" stop-color="#dcdcdc"/><stop offset="0.88" stop-color="#cecece"/><stop offset="1" stop-color="#c3c3c3"/></linearGradient><linearGradient id="pc4" gradientUnits="userSpaceOnUse" x1="1094.8" y1="743.5" x2="1166.3" y2="743.5"><stop offset="0" stop-color="#d2d2d2"/><stop offset="0.2" stop-color="#e2e2e2"/><stop offset="0.4" stop-color="#e8e8e8"/><stop offset="0.65" stop-color="#dcdcdc"/><stop offset="0.88" stop-color="#cecece"/><stop offset="1" stop-color="#c3c3c3"/></linearGradient><linearGradient id="pc5" gradientUnits="userSpaceOnUse" x1="1172.3" y1="779.5" x2="1243.8" y2="779.5"><stop offset="0" stop-color="#d2d2d2"/><stop offset="0.2" stop-color="#e2e2e2"/><stop offset="0.4" stop-color="#e8e8e8"/><stop offset="0.65" stop-color="#dcdcdc"/><stop offset="0.88" stop-color="#cecece"/><stop offset="1" stop-color="#c3c3c3"/></linearGradient><linearGradient id="prt" gradientUnits="userSpaceOnUse" x1="1100" y1="655" x2="1085" y2="700"><stop offset="0" stop-color="#c9c9c9"/><stop offset="0.25" stop-color="#e9e9e9"/><stop offset="0.5" stop-color="#f4f4f4"/><stop offset="0.8" stop-color="#e2e2e2"/><stop offset="1" stop-color="#cdcdcd"/></linearGradient><linearGradient id="sd1" gradientUnits="userSpaceOnUse" x1="581.3" y1="306.3" x2="729.1" y2="301.3"><stop offset="0" stop-color="#aeaeae"/><stop offset="0.25" stop-color="#9a9a9a"/><stop offset="0.55" stop-color="#8f8f8f"/><stop offset="0.85" stop-color="#939393"/><stop offset="1" stop-color="#a0a0a0"/></linearGradient><linearGradient id="sd2" gradientUnits="userSpaceOnUse" x1="658.3" y1="342.6" x2="806.1" y2="337.6"><stop offset="0" stop-color="#aeaeae"/><stop offset="0.25" stop-color="#9a9a9a"/><stop offset="0.55" stop-color="#8f8f8f"/><stop offset="0.85" stop-color="#939393"/><stop offset="1" stop-color="#a0a0a0"/></linearGradient><linearGradient id="sd3" gradientUnits="userSpaceOnUse" x1="735.3" y1="378.9" x2="883.1" y2="373.9"><stop offset="0" stop-color="#aeaeae"/><stop offset="0.25" stop-color="#9a9a9a"/><stop offset="0.55" stop-color="#8f8f8f"/><stop offset="0.85" stop-color="#939393"/><stop offset="1" stop-color="#a0a0a0"/></linearGradient><linearGradient id="sd4" gradientUnits="userSpaceOnUse" x1="812.3" y1="415.2" x2="960.1" y2="410.2"><stop offset="0" stop-color="#aeaeae"/><stop offset="0.25" stop-color="#9a9a9a"/><stop offset="0.55" stop-color="#8f8f8f"/><stop offset="0.85" stop-color="#939393"/><stop offset="1" stop-color="#a0a0a0"/></linearGradient><linearGradient id="sd5" gradientUnits="userSpaceOnUse" x1="889.3" y1="451.5" x2="1037.1" y2="446.5"><stop offset="0" stop-color="#aeaeae"/><stop offset="0.25" stop-color="#9a9a9a"/><stop offset="0.55" stop-color="#8f8f8f"/><stop offset="0.85" stop-color="#939393"/><stop offset="1" stop-color="#a0a0a0"/></linearGradient><linearGradient id="bside" gradientUnits="userSpaceOnUse" x1="1000" y1="471" x2="1042.7" y2="622.7"><stop offset="0" stop-color="#9e9e9e"/><stop offset="0.18" stop-color="#bdbdbd"/><stop offset="0.272" stop-color="#c9c9c9"/><stop offset="0.285" stop-color="#b6b6b6"/><stop offset="0.69" stop-color="#acacac"/><stop offset="0.7" stop-color="#cdcdcd"/><stop offset="0.775" stop-color="#c6c6c6"/><stop offset="0.785" stop-color="#9e9e9e"/><stop offset="1" stop-color="#a6a6a6"/></linearGradient><linearGradient id="gsk" gradientUnits="userSpaceOnUse" x1="560" y1="300" x2="980" y2="640"><stop offset="0" stop-color="#e1e1e1"/><stop offset="1" stop-color="#d4d4d4"/></linearGradient><linearGradient id="bg1" gradientUnits="userSpaceOnUse" x1="580.0" y1="358.3" x2="645.0" y2="443.3"><stop offset="0" stop-color="#d0d0d0"/><stop offset="0.35" stop-color="#c3c3c3"/><stop offset="0.75" stop-color="#a3a3a3"/><stop offset="1" stop-color="#989898"/></linearGradient><linearGradient id="bg2" gradientUnits="userSpaceOnUse" x1="657.0" y1="394.6" x2="722.0" y2="479.6"><stop offset="0" stop-color="#d0d0d0"/><stop offset="0.35" stop-color="#c3c3c3"/><stop offset="0.75" stop-color="#a3a3a3"/><stop offset="1" stop-color="#989898"/></linearGradient><linearGradient id="bg3" gradientUnits="userSpaceOnUse" x1="734.0" y1="430.9" x2="799.0" y2="515.9"><stop offset="0" stop-color="#d0d0d0"/><stop offset="0.35" stop-color="#c3c3c3"/><stop offset="0.75" stop-color="#a3a3a3"/><stop offset="1" stop-color="#989898"/></linearGradient><linearGradient id="bg4" gradientUnits="userSpaceOnUse" x1="811.0" y1="467.2" x2="876.0" y2="552.2"><stop offset="0" stop-color="#d0d0d0"/><stop offset="0.35" stop-color="#c3c3c3"/><stop offset="0.75" stop-color="#a3a3a3"/><stop offset="1" stop-color="#989898"/></linearGradient><linearGradient id="bg5" gradientUnits="userSpaceOnUse" x1="888.0" y1="503.5" x2="953.0" y2="588.5"><stop offset="0" stop-color="#d0d0d0"/><stop offset="0.35" stop-color="#c3c3c3"/><stop offset="0.75" stop-color="#a3a3a3"/><stop offset="1" stop-color="#989898"/></linearGradient><linearGradient id="hg" x1="0" y1="0" x2="1" y2="1"><stop offset="0" stop-color="#d6d6d6"/><stop offset="1" stop-color="#8e8e8e"/></linearGradient><clipPath id="bc2"><ellipse cx="692.0" cy="434.6" rx="33.2" ry="71.2" transform="rotate(-16.6 692.0 434.6)"/></clipPath><linearGradient id="pf2" gradientUnits="userSpaceOnUse" x1="672.0" y1="384.6" x2="717.0" y2="484.6"><stop offset="0" stop-color="#cfcfcf"/><stop offset="0.4" stop-color="#d9d9d9"/><stop offset="1" stop-color="#e4e4e4"/></linearGradient><clipPath id="bc4"><ellipse cx="846.0" cy="507.2" rx="33.2" ry="71.2" transform="rotate(-16.6 846.0 507.2)"/></clipPath><linearGradient id="pp4" gradientUnits="userSpaceOnUse" x1="850.0" y1="519.2" x2="894.0" y2="529.2"><stop offset="0" stop-color="#d2d2d2"/><stop offset="0.3" stop-color="#e6e6e6"/><stop offset="1" stop-color="#ececec"/></linearGradient><clipPath id="bc5"><ellipse cx="923.0" cy="543.5" rx="33.2" ry="71.2" transform="rotate(-16.6 923.0 543.5)"/></clipPath><linearGradient id="pp5" gradientUnits="userSpaceOnUse" x1="939.0" y1="559.5" x2="983.0" y2="569.5"><stop offset="0" stop-color="#d2d2d2"/><stop offset="0.3" stop-color="#e6e6e6"/><stop offset="1" stop-color="#ececec"/></linearGradient><linearGradient id="idl" gradientUnits="userSpaceOnUse" x1="1192" y1="640" x2="1212" y2="622"><stop offset="0" stop-color="#9c9c9c"/><stop offset="0.5" stop-color="#c8c8c8"/><stop offset="1" stop-color="#e6e6e6"/></linearGradient><linearGradient id="tg2" gradientUnits="userSpaceOnUse" x1="1246.0" y1="484.5" x2="1377.0" y2="484.5"><stop offset="0" stop-color="#2c2c2c"/><stop offset="0.35" stop-color="#444444"/><stop offset="0.7" stop-color="#6a6a6a"/><stop offset="1" stop-color="#888888"/></linearGradient><linearGradient id="g2r" gradientUnits="userSpaceOnUse" x1="1250" y1="430" x2="1370" y2="540"><stop offset="0" stop-color="#b0b0b0"/><stop offset="0.3" stop-color="#c8c8c8"/><stop offset="1" stop-color="#cbcbcb"/></linearGradient><radialGradient id="blt" cx="0.4" cy="0.35" r="0.7"><stop offset="0" stop-color="#e4e4e4"/><stop offset="1" stop-color="#a8a8a8"/></radialGradient><linearGradient id="shf" gradientUnits="userSpaceOnUse" x1="1298" y1="470" x2="1342" y2="505"><stop offset="0" stop-color="#e6e6e6"/><stop offset="0.5" stop-color="#d0d0d0"/><stop offset="1" stop-color="#a6a6a6"/></linearGradient><clipPath id="ah0"><path d="M1165.0,470.7 L1163.1,474.9 L1160.7,478.8 L1158.0,482.4 L1155.0,485.7 L1151.6,488.5 L1148.0,490.8 L1144.3,492.6 L1140.5,493.8 L1136.6,494.4 L1132.8,494.5 L1129.0,494.0 L1125.5,492.9 L1122.1,491.2 L1119.0,489.1 L1116.3,486.4 L1113.9,483.3 L1111.9,479.7 L1110.4,475.9 L1109.4,471.8 L1108.9,467.4 L1108.9,463.0 L1109.4,458.5 L1110.3,454.0 L1111.8,449.7 L1113.7,445.5 L1116.1,441.6 L1118.8,438.0 L1121.8,434.7 L1125.2,431.9 L1128.8,429.6 L1132.5,427.8 L1136.3,426.6 L1140.2,426.0 L1144.0,425.9 L1147.8,426.4 L1151.3,427.5 L1154.7,429.2 L1157.8,431.3 L1160.5,434.0 L1162.9,437.1 L1164.9,440.7 L1166.4,444.5 L1167.4,448.6 L1167.9,453.0 L1167.9,457.4 L1167.4,461.9 L1166.5,466.4Z"/></clipPath><clipPath id="ah1"><path d="M1222.9,508.9 L1221.0,513.1 L1218.6,517.0 L1215.9,520.6 L1212.9,523.9 L1209.5,526.7 L1205.9,529.0 L1202.2,530.8 L1198.4,532.0 L1194.5,532.6 L1190.7,532.7 L1186.9,532.2 L1183.4,531.1 L1180.0,529.4 L1176.9,527.3 L1174.2,524.6 L1171.8,521.5 L1169.8,517.9 L1168.3,514.1 L1167.3,510.0 L1166.8,505.6 L1166.8,501.2 L1167.3,496.7 L1168.2,492.2 L1169.7,487.9 L1171.6,483.7 L1174.0,479.8 L1176.7,476.2 L1179.7,472.9 L1183.1,470.1 L1186.7,467.8 L1190.4,466.0 L1194.2,464.8 L1198.1,464.2 L1201.9,464.1 L1205.7,464.6 L1209.2,465.7 L1212.6,467.4 L1215.7,469.5 L1218.4,472.2 L1220.8,475.3 L1222.8,478.9 L1224.3,482.7 L1225.3,486.8 L1225.8,491.2 L1225.8,495.6 L1225.3,500.1 L1224.4,504.6Z"/></clipPath><clipPath id="ah2"><path d="M1199.0,589.3 L1197.1,593.5 L1194.7,597.4 L1192.0,601.0 L1189.0,604.3 L1185.6,607.1 L1182.0,609.4 L1178.3,611.2 L1174.5,612.4 L1170.6,613.0 L1166.8,613.1 L1163.0,612.6 L1159.5,611.5 L1156.1,609.8 L1153.0,607.7 L1150.3,605.0 L1147.9,601.9 L1145.9,598.3 L1144.4,594.5 L1143.4,590.4 L1142.9,586.0 L1142.9,581.6 L1143.4,577.1 L1144.3,572.6 L1145.8,568.3 L1147.7,564.1 L1150.1,560.2 L1152.8,556.6 L1155.8,553.3 L1159.2,550.5 L1162.8,548.2 L1166.5,546.4 L1170.3,545.2 L1174.2,544.6 L1178.0,544.5 L1181.8,545.0 L1185.3,546.1 L1188.7,547.8 L1191.8,549.9 L1194.5,552.6 L1196.9,555.7 L1198.9,559.3 L1200.4,563.1 L1201.4,567.2 L1201.9,571.6 L1201.9,576.0 L1201.4,580.5 L1200.5,585.0Z"/></clipPath><clipPath id="ah3"><path d="M1126.8,600.2 L1124.9,604.4 L1122.5,608.3 L1119.8,611.9 L1116.8,615.2 L1113.4,618.0 L1109.8,620.3 L1106.1,622.1 L1102.3,623.3 L1098.4,623.9 L1094.6,624.0 L1090.8,623.5 L1087.3,622.4 L1083.9,620.7 L1080.8,618.6 L1078.1,615.9 L1075.7,612.8 L1073.7,609.2 L1072.2,605.4 L1071.2,601.3 L1070.7,596.9 L1070.7,592.5 L1071.2,588.0 L1072.1,583.5 L1073.6,579.2 L1075.5,575.0 L1077.9,571.1 L1080.6,567.5 L1083.6,564.2 L1087.0,561.4 L1090.6,559.1 L1094.3,557.3 L1098.1,556.1 L1102.0,555.5 L1105.8,555.4 L1109.6,555.9 L1113.1,557.0 L1116.5,558.7 L1119.6,560.8 L1122.3,563.5 L1124.7,566.6 L1126.7,570.2 L1128.2,574.0 L1129.2,578.1 L1129.7,582.5 L1129.7,586.9 L1129.2,591.4 L1128.3,595.9Z"/></clipPath><clipPath id="ah4"><path d="M1105.2,527.0 L1103.3,531.2 L1100.9,535.1 L1098.2,538.7 L1095.2,542.0 L1091.8,544.8 L1088.2,547.1 L1084.5,548.9 L1080.7,550.1 L1076.8,550.7 L1073.0,550.8 L1069.2,550.3 L1065.7,549.2 L1062.3,547.5 L1059.2,545.4 L1056.5,542.7 L1054.1,539.6 L1052.1,536.0 L1050.6,532.2 L1049.6,528.1 L1049.1,523.7 L1049.1,519.3 L1049.6,514.8 L1050.5,510.3 L1052.0,506.0 L1053.9,501.8 L1056.3,497.9 L1059.0,494.3 L1062.0,491.0 L1065.4,488.2 L1069.0,485.9 L1072.7,484.1 L1076.5,482.9 L1080.4,482.3 L1084.2,482.2 L1088.0,482.7 L1091.5,483.8 L1094.9,485.5 L1098.0,487.6 L1100.7,490.3 L1103.1,493.4 L1105.1,497.0 L1106.6,500.8 L1107.6,504.9 L1108.1,509.3 L1108.1,513.7 L1107.6,518.2 L1106.7,522.7Z"/></clipPath><linearGradient id="tga" gradientUnits="userSpaceOnUse" x1="1033.5" y1="527.8000000000001" x2="1241.5" y2="527.8000000000001"><stop offset="0" stop-color="#2c2c2c"/><stop offset="0.35" stop-color="#444444"/><stop offset="0.7" stop-color="#6a6a6a"/><stop offset="1" stop-color="#888888"/></linearGradient><clipPath id="ch0"><path d="M1342.6,621.5 L1340.7,625.7 L1338.3,629.6 L1335.6,633.2 L1332.6,636.5 L1329.2,639.3 L1325.6,641.6 L1321.9,643.4 L1318.1,644.6 L1314.2,645.2 L1310.4,645.3 L1306.6,644.8 L1303.1,643.7 L1299.7,642.0 L1296.6,639.9 L1293.9,637.2 L1291.5,634.1 L1289.5,630.5 L1288.0,626.7 L1287.0,622.6 L1286.5,618.2 L1286.5,613.8 L1287.0,609.3 L1287.9,604.8 L1289.4,600.5 L1291.3,596.3 L1293.7,592.4 L1296.4,588.8 L1299.4,585.5 L1302.8,582.7 L1306.4,580.4 L1310.1,578.6 L1313.9,577.4 L1317.8,576.8 L1321.6,576.7 L1325.4,577.2 L1328.9,578.3 L1332.3,580.0 L1335.4,582.1 L1338.1,584.8 L1340.5,587.9 L1342.5,591.5 L1344.0,595.3 L1345.0,599.4 L1345.5,603.8 L1345.5,608.2 L1345.0,612.7 L1344.1,617.2Z"/></clipPath><clipPath id="ch1"><path d="M1411.6,634.8 L1409.7,639.0 L1407.3,642.9 L1404.6,646.5 L1401.6,649.8 L1398.2,652.6 L1394.6,654.9 L1390.9,656.7 L1387.1,657.9 L1383.2,658.5 L1379.4,658.6 L1375.6,658.1 L1372.1,657.0 L1368.7,655.3 L1365.6,653.2 L1362.9,650.5 L1360.5,647.4 L1358.5,643.8 L1357.0,640.0 L1356.0,635.9 L1355.5,631.5 L1355.5,627.1 L1356.0,622.6 L1356.9,618.1 L1358.4,613.8 L1360.3,609.6 L1362.7,605.7 L1365.4,602.1 L1368.4,598.8 L1371.8,596.0 L1375.4,593.7 L1379.1,591.9 L1382.9,590.7 L1386.8,590.1 L1390.6,590.0 L1394.4,590.5 L1397.9,591.6 L1401.3,593.3 L1404.4,595.4 L1407.1,598.1 L1409.5,601.2 L1411.5,604.8 L1413.0,608.6 L1414.0,612.7 L1414.5,617.1 L1414.5,621.5 L1414.0,626.0 L1413.1,630.5Z"/></clipPath><clipPath id="ch2"><path d="M1409.9,714.8 L1408.0,719.0 L1405.6,722.9 L1402.9,726.5 L1399.9,729.8 L1396.5,732.6 L1392.9,734.9 L1389.2,736.7 L1385.4,737.9 L1381.5,738.5 L1377.7,738.6 L1373.9,738.1 L1370.4,737.0 L1367.0,735.3 L1363.9,733.2 L1361.2,730.5 L1358.8,727.4 L1356.8,723.8 L1355.3,720.0 L1354.3,715.9 L1353.8,711.5 L1353.8,707.1 L1354.3,702.6 L1355.2,698.1 L1356.7,693.8 L1358.6,689.6 L1361.0,685.7 L1363.7,682.1 L1366.7,678.8 L1370.1,676.0 L1373.7,673.7 L1377.4,671.9 L1381.2,670.7 L1385.1,670.1 L1388.9,670.0 L1392.7,670.5 L1396.2,671.6 L1399.6,673.3 L1402.7,675.4 L1405.4,678.1 L1407.8,681.2 L1409.8,684.8 L1411.3,688.6 L1412.3,692.7 L1412.8,697.1 L1412.8,701.5 L1412.3,706.0 L1411.4,710.5Z"/></clipPath><clipPath id="ch3"><path d="M1341.6,753.2 L1339.7,757.4 L1337.3,761.3 L1334.6,764.9 L1331.6,768.2 L1328.2,771.0 L1324.6,773.3 L1320.9,775.1 L1317.1,776.3 L1313.2,776.9 L1309.4,777.0 L1305.6,776.5 L1302.1,775.4 L1298.7,773.7 L1295.6,771.6 L1292.9,768.9 L1290.5,765.8 L1288.5,762.2 L1287.0,758.4 L1286.0,754.3 L1285.5,749.9 L1285.5,745.5 L1286.0,741.0 L1286.9,736.5 L1288.4,732.2 L1290.3,728.0 L1292.7,724.1 L1295.4,720.5 L1298.4,717.2 L1301.8,714.4 L1305.4,712.1 L1309.1,710.3 L1312.9,709.1 L1316.8,708.5 L1320.6,708.4 L1324.4,708.9 L1327.9,710.0 L1331.3,711.7 L1334.4,713.8 L1337.1,716.5 L1339.5,719.6 L1341.5,723.2 L1343.0,727.0 L1344.0,731.1 L1344.5,735.5 L1344.5,739.9 L1344.0,744.4 L1343.1,748.9Z"/></clipPath><clipPath id="ch4"><path d="M1299.9,693.2 L1298.0,697.4 L1295.6,701.3 L1292.9,704.9 L1289.9,708.2 L1286.5,711.0 L1282.9,713.3 L1279.2,715.1 L1275.4,716.3 L1271.5,716.9 L1267.7,717.0 L1263.9,716.5 L1260.4,715.4 L1257.0,713.7 L1253.9,711.6 L1251.2,708.9 L1248.8,705.8 L1246.8,702.2 L1245.3,698.4 L1244.3,694.3 L1243.8,689.9 L1243.8,685.5 L1244.3,681.0 L1245.2,676.5 L1246.7,672.2 L1248.6,668.0 L1251.0,664.1 L1253.7,660.5 L1256.7,657.2 L1260.1,654.4 L1263.7,652.1 L1267.4,650.3 L1271.2,649.1 L1275.1,648.5 L1278.9,648.4 L1282.7,648.9 L1286.2,650.0 L1289.6,651.7 L1292.7,653.8 L1295.4,656.5 L1297.8,659.6 L1299.8,663.2 L1301.3,667.0 L1302.3,671.1 L1302.8,675.5 L1302.8,679.9 L1302.3,684.4 L1301.4,688.9Z"/></clipPath><linearGradient id="tgc" gradientUnits="userSpaceOnUse" x1="1231.2" y1="671.9" x2="1439.2" y2="671.9"><stop offset="0" stop-color="#2c2c2c"/><stop offset="0.35" stop-color="#444444"/><stop offset="0.7" stop-color="#6a6a6a"/><stop offset="1" stop-color="#888888"/></linearGradient></defs>
<polygon points="721.3,228.8 747.5,186.0 778.0,198.0 785.0,196.7 830.0,126.0 916.7,123.3 990.0,141.7 1073.0,176.0 1145.0,213.0 1228.0,250.0 1298.0,283.0 1373.8,255.0 1370.0,265.0 1390.0,322.5 1400.0,332.5 1407.5,347.5 1408.8,360.0 1402.5,368.8 1406.3,370.0 1430.0,442.0 1441.7,476.7 1398.3,543.3 1426.7,568.3 1420.0,580.0 1377.0,650.0 1386.0,676.0 1388.0,740.0 1392.0,766.0 1300.0,800.0 1100.0,640.0 1000.0,420.0 721.3,258.0" fill="#b8b6b6" />
<polygon points="721.3,228.8 747.5,186.0 1171.0,381.0 1160.0,427.1" fill="#b3b1b1" />
<polyline points="747.5,186.0 1171.0,381.0" fill="none" stroke="#3a3a3a" stroke-width="0.7" stroke-linejoin="round" />
<polygon points="721.3,228.8 1130.0,413.5 1120.0,470.0 1000.0,440.0 721.3,262.0" fill="url(#lstrip)" />
<polyline points="721.3,228.8 1113.0,405.8" fill="none" stroke="#3a3a3a" stroke-width="0.7" stroke-linejoin="round" />
<polyline points="721.3,228.8 721.3,256.0" fill="none" stroke="#3a3a3a" stroke-width="0.7" stroke-linejoin="round" />
<polyline points="721.3,228.8 747.5,186.0 778.0,198.0 785.0,196.7 830.0,126.0 916.7,123.3" fill="none" stroke="#555" stroke-width="0.6" stroke-linejoin="round" />
<polygon points="1197.5,293.0 1284.0,291.0 1298.0,283.0 1373.8,255.0 1370.0,265.0 1390.0,322.5 1400.0,332.5 1407.5,347.5 1408.8,360.0 1402.5,368.8 1406.3,370.0 1430.0,442.0 1441.7,476.7 1398.3,543.3 1426.7,568.3 1420.0,580.0 1377.0,650.0 1386.0,676.0 1388.0,740.0 1392.0,766.0 1300.0,800.0 1150.0,640.0 1157.0,404.0 1170.0,385.0 1152.5,370.0" fill="#c9c9c9" />
<polyline points="1370.0,265.0 1390.0,322.5" fill="none" stroke="#555" stroke-width="0.5" stroke-linejoin="round" />
<polyline points="1406.3,370.0 1430.0,442.0 1441.7,476.7 1398.3,543.3 1426.7,568.3 1420.0,580.0" fill="none" stroke="#666" stroke-width="0.6" stroke-linejoin="round" />
<polyline points="1404.0,372.0 1427.0,443.0 1438.0,476.5 1394.0,542.0" fill="none" stroke="#777" stroke-width="0.5" stroke-linejoin="round" />
<path d="M1317.5,271.3 L1390,322.5 Q1400,330 1407.5,347.5 Q1410.5,360 1402.5,368.8 L1401.3,368.8 L1288.8,288.8 Z" fill="url(#rdg)" />
<path d="M1390,322.5 Q1400,330 1407.5,347.5 Q1410.5,360 1402.5,368.8" fill="none" stroke="#555" stroke-width="0.6" stroke-linejoin="round" stroke-linecap="round" />
<path d="M1386,324 Q1403,345 1398.5,366.5" fill="none" stroke="#777" stroke-width="0.5" stroke-linejoin="round" stroke-linecap="round" />
<polyline points="1288.8,288.8 1401.3,368.8" fill="none" stroke="#3a3a3a" stroke-width="0.6" stroke-linejoin="round" />
<polyline points="1317.5,271.3 1390.0,322.5" fill="none" stroke="#888" stroke-width="0.5" stroke-linejoin="round" />
<polygon points="1197.5,292.5 1283.8,288.8 1282.5,296.3 1198.8,297.5" fill="#bdbdbd" stroke="#444" stroke-width="0.5" stroke-linejoin="round" />
<polygon points="1200.0,341.3 1212.5,348.8 1190.0,392.0 1175.0,382.5" fill="url(#pkt)" />
<polygon points="1212.5,348.8 1236.3,360.0 1206.3,403.8 1190.0,392.0" fill="#c0c0c0" />
<polyline points="1175.0,382.5 1200.0,341.3 1236.3,360.0 1206.3,403.8 1175.0,382.5" fill="none" stroke="#3a3a3a" stroke-width="0.6" stroke-linejoin="round" />
<polyline points="1212.5,348.8 1190.0,392.0" fill="none" stroke="#3a3a3a" stroke-width="0.5" stroke-linejoin="round" />
<polyline points="1190.0,392.0 1203.0,400.0 1206.3,403.8" fill="none" stroke="#3a3a3a" stroke-width="0.5" stroke-linejoin="round" />
<polyline points="1153.8,370.0 1210.0,413.8" fill="none" stroke="#3a3a3a" stroke-width="0.6" stroke-linejoin="round" />
<polyline points="1157.0,404.0 1170.0,385.0" fill="none" stroke="#3a3a3a" stroke-width="0.5" stroke-linejoin="round" />
<polyline points="1236.3,360.0 1300.0,400.0" fill="none" stroke="#3a3a3a" stroke-width="0.6" stroke-linejoin="round" />
<polyline points="1210.0,413.8 1237.5,368.8 1297.5,405.0" fill="none" stroke="#3a3a3a" stroke-width="0.5" stroke-linejoin="round" />
<polyline points="1378.0,470.0 1421.0,497.0 1395.0,540.0" fill="none" stroke="#3a3a3a" stroke-width="0.5" stroke-linejoin="round" />
<polyline points="1376.0,478.0 1413.0,501.0 1392.0,536.0" fill="none" stroke="#3a3a3a" stroke-width="0.5" stroke-linejoin="round" />
<polyline points="1363.0,530.0 1398.3,543.3" fill="none" stroke="#3a3a3a" stroke-width="0.5" stroke-linejoin="round" />
<polygon points="1294.0,268.0 1312.0,268.0 1312.0,294.0 1294.0,294.0" fill="#c9c9c9" />
<polygon points="830.0,126.0 916.7,123.3 990.0,120.0 1040.0,150.0 1075.0,166.0 1120.0,190.0 1190.0,220.0 1232.0,237.0 1290.0,262.0 1298.0,283.0 1284.0,291.0 1197.0,292.5 1193.0,292.4 1116.6,256.2 1040.0,220.0 965.0,185.0 886.7,148.3" fill="#a1a0a0" />
<polyline points="830.0,126.0 874.4,147.5" fill="none" stroke="#3a3a3a" stroke-width="0.7" stroke-linejoin="round" />
<polygon points="916.7,121.8 1030.0,172.3 1170.0,234.8 1298.0,291.8 1300.0,283.0 1290.0,262.0 1232.0,237.0 1190.0,220.0 1120.0,190.0 1075.0,166.0 1040.0,150.0 990.0,120.0 920.0,108.0" fill="#bebdbd" />
<polyline points="916.7,121.8 1030.0,172.3 1170.0,234.8 1298.0,291.8" fill="none" stroke="#3a3a3a" stroke-width="0.7" stroke-linejoin="round" />
<polygon points="874.4,147.5 886.9,147.5 908.8,147.5 929.5,149.4 945.7,157.1 938.2,160.0 909.4,160.6 906.3,162.5 888.1,153.7" fill="#c9c9c9" />
<polygon points="874.4,147.5 831.8,216.4 831.8,221.7 843.0,227.7 844.3,223.9 888.1,153.7" fill="url(#slw1)" />
<polygon points="888.1,153.7 844.3,223.9 843.0,227.7 857.0,233.7 864.0,228.7 907.5,161.2 909.4,153.7" fill="#c2c1c1" />
<polyline points="906.3,162.5 864.0,228.7 857.0,233.7 831.8,221.7 831.8,216.4 874.4,147.5 908.8,147.5 929.5,149.4 945.7,157.1 938.2,160.0 909.4,160.6 906.3,162.5" fill="none" stroke="#3a3a3a" stroke-width="0.7" stroke-linejoin="round" />
<polyline points="888.1,153.7 844.3,223.9 843.0,227.7" fill="none" stroke="#3a3a3a" stroke-width="0.7" stroke-linejoin="round" />
<polyline points="891.0,154.7 848.0,225.2" fill="none" stroke="#3a3a3a" stroke-width="0.5" stroke-linejoin="round" />
<polyline points="831.8,216.4 844.3,223.9" fill="none" stroke="#3a3a3a" stroke-width="0.5" stroke-linejoin="round" />
<polyline points="888.1,153.7 909.4,153.7" fill="none" stroke="#3a3a3a" stroke-width="0.5" stroke-linejoin="round" />
<polyline points="886.9,147.5 888.1,153.7" fill="none" stroke="#3a3a3a" stroke-width="0.5" stroke-linejoin="round" />
<polyline points="908.8,147.5 909.4,160.6" fill="none" stroke="#3a3a3a" stroke-width="0.5" stroke-linejoin="round" />
<polyline points="929.5,149.4 924.0,160.2" fill="none" stroke="#3a3a3a" stroke-width="0.5" stroke-linejoin="round" />
<polyline points="906.3,162.5 951.4,183.8" fill="none" stroke="#3a3a3a" stroke-width="0.7" stroke-linejoin="round" />
<polygon points="951.4,183.8 963.9,183.8 985.8,183.8 1006.5,185.7 1022.7,193.4 1015.2,196.3 986.4,196.9 983.3,198.8 965.1,190.0" fill="#c9c9c9" />
<polygon points="951.4,183.8 908.8,252.7 908.8,258.0 920.0,264.0 921.3,260.2 965.1,190.0" fill="url(#slw2)" />
<polygon points="965.1,190.0 921.3,260.2 920.0,264.0 934.0,270.0 941.0,265.0 984.5,197.5 986.4,190.0" fill="#c2c1c1" />
<polyline points="983.3,198.8 941.0,265.0 934.0,270.0 908.8,258.0 908.8,252.7 951.4,183.8 985.8,183.8 1006.5,185.7 1022.7,193.4 1015.2,196.3 986.4,196.9 983.3,198.8" fill="none" stroke="#3a3a3a" stroke-width="0.7" stroke-linejoin="round" />
<polyline points="965.1,190.0 921.3,260.2 920.0,264.0" fill="none" stroke="#3a3a3a" stroke-width="0.7" stroke-linejoin="round" />
<polyline points="968.0,191.0 925.0,261.5" fill="none" stroke="#3a3a3a" stroke-width="0.5" stroke-linejoin="round" />
<polyline points="908.8,252.7 921.3,260.2" fill="none" stroke="#3a3a3a" stroke-width="0.5" stroke-linejoin="round" />
<polyline points="965.1,190.0 986.4,190.0" fill="none" stroke="#3a3a3a" stroke-width="0.5" stroke-linejoin="round" />
<polyline points="963.9,183.8 965.1,190.0" fill="none" stroke="#3a3a3a" stroke-width="0.5" stroke-linejoin="round" />
<polyline points="985.8,183.8 986.4,196.9" fill="none" stroke="#3a3a3a" stroke-width="0.5" stroke-linejoin="round" />
<polyline points="1006.5,185.7 1001.0,196.5" fill="none" stroke="#3a3a3a" stroke-width="0.5" stroke-linejoin="round" />
<polyline points="983.3,198.8 1028.4,220.1" fill="none" stroke="#3a3a3a" stroke-width="0.7" stroke-linejoin="round" />
<polygon points="1028.4,220.1 1040.9,220.1 1062.8,220.1 1083.5,222.0 1099.7,229.7 1092.2,232.6 1063.4,233.2 1060.3,235.1 1042.1,226.3" fill="#c9c9c9" />
<polygon points="1028.4,220.1 985.8,289.0 985.8,294.3 997.0,300.3 998.3,296.5 1042.1,226.3" fill="url(#slw3)" />
<polygon points="1042.1,226.3 998.3,296.5 997.0,300.3 1011.0,306.3 1018.0,301.3 1061.5,233.8 1063.4,226.3" fill="#c2c1c1" />
<polyline points="1060.3,235.1 1018.0,301.3 1011.0,306.3 985.8,294.3 985.8,289.0 1028.4,220.1 1062.8,220.1 1083.5,222.0 1099.7,229.7 1092.2,232.6 1063.4,233.2 1060.3,235.1" fill="none" stroke="#3a3a3a" stroke-width="0.7" stroke-linejoin="round" />
<polyline points="1042.1,226.3 998.3,296.5 997.0,300.3" fill="none" stroke="#3a3a3a" stroke-width="0.7" stroke-linejoin="round" />
<polyline points="1045.0,227.3 1002.0,297.8" fill="none" stroke="#3a3a3a" stroke-width="0.5" stroke-linejoin="round" />
<polyline points="985.8,289.0 998.3,296.5" fill="none" stroke="#3a3a3a" stroke-width="0.5" stroke-linejoin="round" />
<polyline points="1042.1,226.3 1063.4,226.3" fill="none" stroke="#3a3a3a" stroke-width="0.5" stroke-linejoin="round" />
<polyline points="1040.9,220.1 1042.1,226.3" fill="none" stroke="#3a3a3a" stroke-width="0.5" stroke-linejoin="round" />
<polyline points="1062.8,220.1 1063.4,233.2" fill="none" stroke="#3a3a3a" stroke-width="0.5" stroke-linejoin="round" />
<polyline points="1083.5,222.0 1078.0,232.8" fill="none" stroke="#3a3a3a" stroke-width="0.5" stroke-linejoin="round" />
<polyline points="1060.3,235.1 1105.4,256.4" fill="none" stroke="#3a3a3a" stroke-width="0.7" stroke-linejoin="round" />
<polygon points="1105.4,256.4 1117.9,256.4 1139.8,256.4 1160.5,258.3 1176.7,266.0 1169.2,268.9 1140.4,269.5 1137.3,271.4 1119.1,262.6" fill="#c9c9c9" />
<polygon points="1105.4,256.4 1062.8,325.3 1062.8,330.6 1074.0,336.6 1075.3,332.8 1119.1,262.6" fill="url(#slw4)" />
<polygon points="1119.1,262.6 1075.3,332.8 1074.0,336.6 1088.0,342.6 1095.0,337.6 1138.5,270.1 1140.4,262.6" fill="#c2c1c1" />
<polyline points="1137.3,271.4 1095.0,337.6 1088.0,342.6 1062.8,330.6 1062.8,325.3 1105.4,256.4 1139.8,256.4 1160.5,258.3 1176.7,266.0 1169.2,268.9 1140.4,269.5 1137.3,271.4" fill="none" stroke="#3a3a3a" stroke-width="0.7" stroke-linejoin="round" />
<polyline points="1119.1,262.6 1075.3,332.8 1074.0,336.6" fill="none" stroke="#3a3a3a" stroke-width="0.7" stroke-linejoin="round" />
<polyline points="1122.0,263.6 1079.0,334.1" fill="none" stroke="#3a3a3a" stroke-width="0.5" stroke-linejoin="round" />
<polyline points="1062.8,325.3 1075.3,332.8" fill="none" stroke="#3a3a3a" stroke-width="0.5" stroke-linejoin="round" />
<polyline points="1119.1,262.6 1140.4,262.6" fill="none" stroke="#3a3a3a" stroke-width="0.5" stroke-linejoin="round" />
<polyline points="1117.9,256.4 1119.1,262.6" fill="none" stroke="#3a3a3a" stroke-width="0.5" stroke-linejoin="round" />
<polyline points="1139.8,256.4 1140.4,269.5" fill="none" stroke="#3a3a3a" stroke-width="0.5" stroke-linejoin="round" />
<polyline points="1160.5,258.3 1155.0,269.1" fill="none" stroke="#3a3a3a" stroke-width="0.5" stroke-linejoin="round" />
<polyline points="1137.3,271.4 1182.4,292.7" fill="none" stroke="#3a3a3a" stroke-width="0.7" stroke-linejoin="round" />
<polygon points="1187.5,291.3 1141.3,360.0 1142.5,366.3 1155.0,372.5 1153.8,370.0 1197.5,297.5 1197.5,292.5" fill="url(#slw5)" stroke="#3a3a3a" stroke-width="0.7" stroke-linejoin="round" />
<polyline points="1141.3,360.0 1153.8,370.0" fill="none" stroke="#3a3a3a" stroke-width="0.5" stroke-linejoin="round" />
<path d="M1036.9,69.8 C1046.7,74.8 1062.7,89.8 1068.2,111.8 L1068.7,120.8 L1079.4,164.8 L1040.0,161.1 L1003.4,132.8 Z" fill="url(#rn1)" stroke="#555" stroke-width="0.6" stroke-linejoin="round" stroke-linecap="round" />
<polygon points="1003.4,132.8 1040.0,161.1 1016.7,149.8" fill="#aaaaaa" />
<polyline points="1030.0,100.9 1063.2,122.4 1068.7,120.8" fill="none" stroke="#3a3a3a" stroke-width="0.5" stroke-linejoin="round" />
<polyline points="1063.2,122.4 1079.4,164.8" fill="none" stroke="#3a3a3a" stroke-width="0.5" stroke-linejoin="round" />
<polygon points="1036.9,69.8 1038.4,84.5 1003.4,132.8 990.2,141.3" fill="#b2b2b2" stroke="#444" stroke-width="0.6" stroke-linejoin="round" />
<path d="M961.0,41.4 Q964.3,36.4 969.8,38.9 L1031.4,67.3 Q1036.9,69.8 1033.6,74.8 L993.5,136.3 Q990.2,141.3 984.8,138.7 L923.1,108.4 Q917.7,105.8 921.0,100.8 Z" fill="#bebdbd" />
<path d="M990.2,141.3 L1033.6,74.8 Q1036.9,69.8 1031.4,67.3 L969.8,38.9 Q964.3,36.4 961.0,41.4 L919.9,102.5" fill="none" stroke="#444" stroke-width="0.6" stroke-linejoin="round" stroke-linecap="round" />
<polygon points="965.6,52.1 1021.3,77.1 986.2,132.2 930.5,107.2" fill="#c6c6c6" stroke="#333" stroke-width="0.7" stroke-linejoin="round" />
<polygon points="965.6,52.1 1021.3,77.1 1018.8,82.1 990.6,70.9" fill="#dcdcdc" />
<polygon points="990.6,70.9 1018.8,82.1 1001.9,105.9" fill="#eaeaea" stroke="#333" stroke-width="0.6" stroke-linejoin="round" />
<polyline points="965.6,52.1 990.6,70.9" fill="none" stroke="#3a3a3a" stroke-width="0.6" stroke-linejoin="round" />
<ellipse cx="961.2" cy="45.8" rx="3.4" ry="5" transform="rotate(30 961.2 45.8)" fill="#d8d8d8" stroke="#333" stroke-width="0.7"/>
<ellipse cx="1029.2" cy="77.1" rx="3.4" ry="5" transform="rotate(30 1029.2 77.1)" fill="#d8d8d8" stroke="#333" stroke-width="0.7"/>
<ellipse cx="924.2" cy="104.7" rx="3.4" ry="5" transform="rotate(30 924.2 104.7)" fill="#d8d8d8" stroke="#333" stroke-width="0.7"/>
<ellipse cx="991.0" cy="136.1" rx="3.4" ry="5" transform="rotate(30 991.0 136.1)" fill="#d8d8d8" stroke="#333" stroke-width="0.7"/>
<path d="M1189.4,140.8 C1199.2,145.8 1215.2,160.8 1220.7,182.8 L1221.2,191.8 L1231.9,235.8 L1192.5,232.1 L1155.9,203.8 Z" fill="url(#rn2)" stroke="#555" stroke-width="0.6" stroke-linejoin="round" stroke-linecap="round" />
<polygon points="1155.9,203.8 1192.5,232.1 1169.2,220.8" fill="#aaaaaa" />
<polyline points="1182.5,171.9 1215.7,193.4 1221.2,191.8" fill="none" stroke="#3a3a3a" stroke-width="0.5" stroke-linejoin="round" />
<polyline points="1215.7,193.4 1231.9,235.8" fill="none" stroke="#3a3a3a" stroke-width="0.5" stroke-linejoin="round" />
<polygon points="1189.4,140.8 1190.9,155.5 1155.9,203.8 1142.7,212.3" fill="#b2b2b2" stroke="#444" stroke-width="0.6" stroke-linejoin="round" />
<path d="M1113.5,112.4 Q1116.8,107.4 1122.3,109.9 L1183.9,138.3 Q1189.4,140.8 1186.1,145.8 L1146.0,207.3 Q1142.7,212.3 1137.3,209.7 L1075.6,179.4 Q1070.2,176.8 1073.5,171.8 Z" fill="#bebdbd" />
<path d="M1142.7,212.3 L1186.1,145.8 Q1189.4,140.8 1183.9,138.3 L1122.3,109.9 Q1116.8,107.4 1113.5,112.4 L1072.4,173.5" fill="none" stroke="#444" stroke-width="0.6" stroke-linejoin="round" stroke-linecap="round" />
<polygon points="1118.1,123.1 1173.8,148.1 1138.7,203.2 1083.0,178.2" fill="#c6c6c6" stroke="#333" stroke-width="0.7" stroke-linejoin="round" />
<polygon points="1118.1,123.1 1173.8,148.1 1171.3,153.1 1143.1,141.9" fill="#dcdcdc" />
<polygon points="1143.1,141.9 1171.3,153.1 1154.4,176.9" fill="#eaeaea" stroke="#333" stroke-width="0.6" stroke-linejoin="round" />
<polyline points="1118.1,123.1 1143.1,141.9" fill="none" stroke="#3a3a3a" stroke-width="0.6" stroke-linejoin="round" />
<ellipse cx="1113.7" cy="116.8" rx="3.4" ry="5" transform="rotate(30 1113.7 116.8)" fill="#d8d8d8" stroke="#333" stroke-width="0.7"/>
<ellipse cx="1181.7" cy="148.1" rx="3.4" ry="5" transform="rotate(30 1181.7 148.1)" fill="#d8d8d8" stroke="#333" stroke-width="0.7"/>
<ellipse cx="1076.7" cy="175.7" rx="3.4" ry="5" transform="rotate(30 1076.7 175.7)" fill="#d8d8d8" stroke="#333" stroke-width="0.7"/>
<ellipse cx="1143.5" cy="207.1" rx="3.4" ry="5" transform="rotate(30 1143.5 207.1)" fill="#d8d8d8" stroke="#333" stroke-width="0.7"/>
<path d="M1341.9,211.8 C1351.7,216.8 1367.7,231.8 1373.2,253.8 L1373.7,262.8 L1384.4,306.8 L1345.0,303.1 L1308.4,274.8 Z" fill="url(#rn3)" stroke="#555" stroke-width="0.6" stroke-linejoin="round" stroke-linecap="round" />
<polygon points="1308.4,274.8 1345.0,303.1 1321.7,291.8" fill="#aaaaaa" />
<polyline points="1335.0,242.9 1368.2,264.4 1373.7,262.8" fill="none" stroke="#3a3a3a" stroke-width="0.5" stroke-linejoin="round" />
<polyline points="1368.2,264.4 1384.4,306.8" fill="none" stroke="#3a3a3a" stroke-width="0.5" stroke-linejoin="round" />
<polygon points="1341.9,211.8 1343.4,226.5 1308.4,274.8 1295.2,283.3" fill="#b2b2b2" stroke="#444" stroke-width="0.6" stroke-linejoin="round" />
<path d="M1266.0,183.4 Q1269.3,178.4 1274.8,180.9 L1336.4,209.3 Q1341.9,211.8 1338.6,216.8 L1298.5,278.3 Q1295.2,283.3 1289.8,280.7 L1228.1,250.4 Q1222.7,247.8 1226.0,242.8 Z" fill="#bebdbd" />
<path d="M1295.2,283.3 L1338.6,216.8 Q1341.9,211.8 1336.4,209.3 L1274.8,180.9 Q1269.3,178.4 1266.0,183.4 L1224.9,244.5" fill="none" stroke="#444" stroke-width="0.6" stroke-linejoin="round" stroke-linecap="round" />
<polygon points="1270.6,194.1 1326.3,219.1 1291.2,274.2 1235.5,249.2" fill="#c6c6c6" stroke="#333" stroke-width="0.7" stroke-linejoin="round" />
<polygon points="1270.6,194.1 1326.3,219.1 1323.8,224.1 1295.6,212.9" fill="#dcdcdc" />
<polygon points="1295.6,212.9 1323.8,224.1 1306.9,247.9" fill="#eaeaea" stroke="#333" stroke-width="0.6" stroke-linejoin="round" />
<polyline points="1270.6,194.1 1295.6,212.9" fill="none" stroke="#3a3a3a" stroke-width="0.6" stroke-linejoin="round" />
<ellipse cx="1266.2" cy="187.8" rx="3.4" ry="5" transform="rotate(30 1266.2 187.8)" fill="#d8d8d8" stroke="#333" stroke-width="0.7"/>
<ellipse cx="1334.2" cy="219.1" rx="3.4" ry="5" transform="rotate(30 1334.2 219.1)" fill="#d8d8d8" stroke="#333" stroke-width="0.7"/>
<ellipse cx="1229.2" cy="246.7" rx="3.4" ry="5" transform="rotate(30 1229.2 246.7)" fill="#d8d8d8" stroke="#333" stroke-width="0.7"/>
<ellipse cx="1296.0" cy="278.1" rx="3.4" ry="5" transform="rotate(30 1296.0 278.1)" fill="#d8d8d8" stroke="#333" stroke-width="0.7"/>
<path d="M640,260 L663.9,235 L710.2,256.3 L716.0,253.5 Q726.0,247.5 733.0,251.0 Q742.0,257.0 745.5,270.0 L750.0,276.5 Q757.0,272.5 766.0,273.8 Q778.0,277.0 787.0,289.0 L793.0,289.8 Q803.0,283.8 810.0,287.3 Q819.0,293.3 822.5,306.3 L827.0,312.8 Q834.0,308.8 843.0,310.1 Q855.0,313.3 864.0,325.3 L870.0,326.1 Q880.0,320.1 887.0,323.6 Q896.0,329.6 899.5,342.6 L904.0,349.1 Q911.0,345.1 920.0,346.4 Q932.0,349.6 941.0,361.6 L947.0,362.4 Q957.0,356.4 964.0,359.9 Q973.0,365.9 976.5,378.9 L981.0,385.4 Q988.0,381.4 997.0,382.7 Q1009.0,385.9 1018.0,397.9 L1024.0,398.7 Q1034.0,392.7 1041.0,396.2 Q1050.0,402.2 1053.5,415.2 L1058.0,421.7 Q1065.0,417.7 1074.0,419.0 Q1086.0,422.2 1095.0,434.2 L1110,440 L1060,520 L640,300 Z" fill="url(#tubeg)" />
<path d="M663.9,232.6 L710.2,256.3 L716.0,253.5 Q726.0,247.5 733.0,251.0 Q742.0,257.0 745.5,270.0 M750.0,276.5 Q757.0,272.5 766.0,273.8 Q778.0,277.0 787.0,289.0 L793.0,289.8 Q803.0,283.8 810.0,287.3 Q819.0,293.3 822.5,306.3 M827.0,312.8 Q834.0,308.8 843.0,310.1 Q855.0,313.3 864.0,325.3 L870.0,326.1 Q880.0,320.1 887.0,323.6 Q896.0,329.6 899.5,342.6 M904.0,349.1 Q911.0,345.1 920.0,346.4 Q932.0,349.6 941.0,361.6 L947.0,362.4 Q957.0,356.4 964.0,359.9 Q973.0,365.9 976.5,378.9 M981.0,385.4 Q988.0,381.4 997.0,382.7 Q1009.0,385.9 1018.0,397.9 L1024.0,398.7 Q1034.0,392.7 1041.0,396.2 Q1050.0,402.2 1053.5,415.2 M1058.0,421.7 Q1065.0,417.7 1074.0,419.0 Q1086.0,422.2 1095.0,434.2 " fill="none" stroke="#4a4a4a" stroke-width="0.6" stroke-linejoin="round" stroke-linecap="round" />
<path d="M726.0,249.0 Q741.0,254.0 745.5,270.0 L738.0,272.0 Z" fill="url(#pst0)" />
<path d="M803.0,285.3 Q818.0,290.3 822.5,306.3 L815.0,308.3 Z" fill="url(#pst1)" />
<path d="M880.0,321.6 Q895.0,326.6 899.5,342.6 L892.0,344.6 Z" fill="url(#pst2)" />
<path d="M957.0,357.9 Q972.0,362.9 976.5,378.9 L969.0,380.9 Z" fill="url(#pst3)" />
<path d="M1034.0,394.2 Q1049.0,399.2 1053.5,415.2 L1046.0,417.2 Z" fill="url(#pst4)" />
<polygon points="690.0,284.3 1070.0,456.8 1050.0,500.0 680.0,330.0" fill="#e0e0e0" />
<polyline points="700.0,288.8 1062.0,453.1" fill="none" stroke="#555" stroke-width="0.6" stroke-linejoin="round" />
<ellipse cx="1046.5" cy="430" rx="13.5" ry="14.5" fill="url(#cend)" stroke="#444" stroke-width="0.6"/>
<path d="M1036,441 Q1046,446 1058,442" fill="none" stroke="#444" stroke-width="0.5" stroke-linejoin="round" stroke-linecap="round" />
<ellipse cx="1061" cy="444" rx="5.5" ry="6" fill="#c4c4c4" stroke="#444" stroke-width="0.5"/>
<ellipse cx="628.8" cy="245" rx="21.3" ry="31.8" transform="rotate(26.7 628.8 245)" fill="#b9b9b9" stroke="#444" stroke-width="0.6"/>
<ellipse cx="634.8" cy="247.8" rx="21.3" ry="31.8" transform="rotate(26.7 634.8 247.8)" fill="url(#flg)" stroke="#444" stroke-width="0.6"/>
<path d="M650.5,225.5 A17,26 26.7 0 0 627,273 L668,294 L712,257.2 L663.9,232.6 Z" fill="url(#tube2)" />
<path d="M650.5,225.5 A17,26 26.7 0 0 627,273" fill="none" stroke="#444" stroke-width="0.6" stroke-linejoin="round" stroke-linecap="round" />
<polygon points="848.8,598.0 1004.0,633.0 1228.0,700.0 1240.0,826.0 1227.0,829.0 1243.8,825.8 1176.3,809.5 1166.3,789.8 1098.8,773.5 1088.8,753.8 1021.3,737.5 1011.3,717.8 943.8,701.5 933.8,681.8 866.3,665.5 851.3,644.0" fill="#d6d6d6" />
<polygon points="1226.0,705.0 1386.5,700.0 1388.0,742.0 1392.5,768.0 1394.0,783.0 1240.0,827.0" fill="url(#pfw)" />
<polyline points="1388.0,742.0 1392.5,768.0 1394.0,781.0" fill="none" stroke="#666" stroke-width="0.5" stroke-linejoin="round" />
<polygon points="1226.2,823.9 1240.0,821.0 1280.5,812.0 1392.8,783.0 1401.3,786.4 1262.0,830.0 1245.0,831.0" fill="#b2b2b2" stroke="#666" stroke-width="0.4" stroke-linejoin="round" />
<polygon points="1226.2,823.9 1227.1,832.3 1244.9,838.8 1265.5,837.9 1401.3,793.9 1401.3,786.4 1262.0,830.0 1245.0,831.0" fill="#e4e4e4" stroke="#666" stroke-width="0.5" stroke-linejoin="round" />
<polyline points="1245.0,831.0 1244.9,838.8" fill="none" stroke="#777" stroke-width="0.5" stroke-linejoin="round" />
<polyline points="1262.0,830.0 1265.5,837.9" fill="none" stroke="#777" stroke-width="0.5" stroke-linejoin="round" />
<polyline points="1228.3,739.3 1240.0,822.0" fill="none" stroke="#555" stroke-width="0.6" stroke-linejoin="round" />
<polyline points="1232.0,741.0 1243.5,821.0" fill="none" stroke="#666" stroke-width="0.5" stroke-linejoin="round" />
<polyline points="1276.7,786.0 1284.0,813.0" fill="none" stroke="#666" stroke-width="0.5" stroke-linejoin="round" />
<polygon points="848.8,598.0 864.0,603.0 866.3,665.0 851.3,644.0" fill="#dedede" stroke="#555" stroke-width="0.5" stroke-linejoin="round" />
<polyline points="857.5,603.8 861.3,650.0" fill="none" stroke="#3a3a3a" stroke-width="0.5" stroke-linejoin="round" stroke-dasharray="3 2"/>
<polygon points="925.0,598.5 935.0,603.0 943.8,701.5 933.8,681.8" fill="#dadada" />
<polyline points="925.0,598.5 933.8,681.8" fill="none" stroke="#3a3a3a" stroke-width="0.6" stroke-linejoin="round" />
<polyline points="927.5,599.0 935.3,682.8" fill="none" stroke="#3a3a3a" stroke-width="0.5" stroke-linejoin="round" />
<polyline points="932.5,602.0 940.3,698.5" fill="none" stroke="#3a3a3a" stroke-width="0.5" stroke-linejoin="round" stroke-dasharray="3 2"/>
<polygon points="1002.5,635.5 1012.5,640.0 1021.3,737.5 1011.3,717.8" fill="#dadada" />
<polyline points="1002.5,635.5 1011.3,717.8" fill="none" stroke="#3a3a3a" stroke-width="0.6" stroke-linejoin="round" />
<polyline points="1005.0,636.0 1012.8,718.8" fill="none" stroke="#3a3a3a" stroke-width="0.5" stroke-linejoin="round" />
<polyline points="1010.0,639.0 1017.8,734.5" fill="none" stroke="#3a3a3a" stroke-width="0.5" stroke-linejoin="round" stroke-dasharray="3 2"/>
<polygon points="1080.0,672.5 1090.0,677.0 1098.8,773.5 1088.8,753.8" fill="#dadada" />
<polyline points="1080.0,672.5 1088.8,753.8" fill="none" stroke="#3a3a3a" stroke-width="0.6" stroke-linejoin="round" />
<polyline points="1082.5,673.0 1090.3,754.8" fill="none" stroke="#3a3a3a" stroke-width="0.5" stroke-linejoin="round" />
<polyline points="1087.5,676.0 1095.3,770.5" fill="none" stroke="#3a3a3a" stroke-width="0.5" stroke-linejoin="round" stroke-dasharray="3 2"/>
<polygon points="1157.5,709.5 1167.5,714.0 1176.3,809.5 1166.3,789.8" fill="#dadada" />
<polyline points="1157.5,709.5 1166.3,789.8" fill="none" stroke="#3a3a3a" stroke-width="0.6" stroke-linejoin="round" />
<polyline points="1160.0,710.0 1167.8,790.8" fill="none" stroke="#3a3a3a" stroke-width="0.5" stroke-linejoin="round" />
<polyline points="1165.0,713.0 1172.8,806.5" fill="none" stroke="#3a3a3a" stroke-width="0.5" stroke-linejoin="round" stroke-dasharray="3 2"/>
<path d="M857.5,566.0 L866.3,665.5 C870.3,675.5 886.3,684.5 907.3,685.5 C918.3,686.0 925.8,683.8 933.8,681.8 L925.0,598.5 Z" fill="url(#pc1)" />
<path d="M857.5,566.0 L866.3,665.5" fill="none" stroke="#555" stroke-width="0.6" stroke-linejoin="round" stroke-linecap="round" />
<path d="M935.0,603.0 L943.8,701.5 C947.8,711.5 963.8,720.5 984.8,721.5 C995.8,722.0 1003.3,719.8 1011.3,717.8 L1002.5,635.5 Z" fill="url(#pc2)" />
<path d="M935.0,603.0 L943.8,701.5" fill="none" stroke="#555" stroke-width="0.6" stroke-linejoin="round" stroke-linecap="round" />
<path d="M1012.5,640.0 L1021.3,737.5 C1025.3,747.5 1041.3,756.5 1062.3,757.5 C1073.3,758.0 1080.8,755.8 1088.8,753.8 L1080.0,672.5 Z" fill="url(#pc3)" />
<path d="M1012.5,640.0 L1021.3,737.5" fill="none" stroke="#555" stroke-width="0.6" stroke-linejoin="round" stroke-linecap="round" />
<path d="M1090.0,677.0 L1098.8,773.5 C1102.8,783.5 1118.8,792.5 1139.8,793.5 C1150.8,794.0 1158.3,791.8 1166.3,789.8 L1157.5,709.5 Z" fill="url(#pc4)" />
<path d="M1090.0,677.0 L1098.8,773.5" fill="none" stroke="#555" stroke-width="0.6" stroke-linejoin="round" stroke-linecap="round" />
<path d="M1167.5,714.0 L1176.3,809.5 C1180.3,819.5 1196.3,828.5 1217.3,829.5 C1228.3,830.0 1235.8,827.8 1243.8,825.8 L1235.0,746.5 Z" fill="url(#pc5)" />
<path d="M1167.5,714.0 L1176.3,809.5" fill="none" stroke="#555" stroke-width="0.6" stroke-linejoin="round" stroke-linecap="round" />
<polygon points="846.3,643.8 845.0,651.3 865.0,663.8 865.0,656.3" fill="#ececec" stroke="#555" stroke-width="0.5" stroke-linejoin="round" />
<polygon points="846.3,643.8 865.0,656.3 863.0,650.0 851.5,643.5" fill="#a3a3a3" stroke="#555" stroke-width="0.4" stroke-linejoin="round" />
<polygon points="916.3,681.3 915.0,686.3 942.5,698.8 942.5,690.0" fill="#ececec" stroke="#555" stroke-width="0.5" stroke-linejoin="round" />
<polygon points="916.3,681.3 942.5,690.0 938.8,683.8 924.8,678.3" fill="#a3a3a3" stroke="#555" stroke-width="0.4" stroke-linejoin="round" />
<polygon points="993.8,717.3 992.5,722.3 1020.0,734.8 1020.0,726.0" fill="#ececec" stroke="#555" stroke-width="0.5" stroke-linejoin="round" />
<polygon points="993.8,717.3 1020.0,726.0 1016.3,719.8 1002.3,714.3" fill="#a3a3a3" stroke="#555" stroke-width="0.4" stroke-linejoin="round" />
<polygon points="1071.3,753.3 1070.0,758.3 1097.5,770.8 1097.5,762.0" fill="#ececec" stroke="#555" stroke-width="0.5" stroke-linejoin="round" />
<polygon points="1071.3,753.3 1097.5,762.0 1093.8,755.8 1079.8,750.3" fill="#a3a3a3" stroke="#555" stroke-width="0.4" stroke-linejoin="round" />
<polygon points="1148.8,789.3 1147.5,794.3 1175.0,806.8 1175.0,798.0" fill="#ececec" stroke="#555" stroke-width="0.5" stroke-linejoin="round" />
<polygon points="1148.8,789.3 1175.0,798.0 1171.3,791.8 1157.3,786.3" fill="#a3a3a3" stroke="#555" stroke-width="0.4" stroke-linejoin="round" />
<polygon points="984.0,618.0 1075.0,595.0 1145.0,655.0 1030.0,640.0 986.0,632.0" fill="#a4a4a4" />
<polygon points="985.0,625.0 1030.0,633.0 1130.0,652.0 1228.0,689.0 1215.0,733.0 1202.5,725.0 1157.5,709.5 1090.0,677.0 1080.0,672.5 1012.5,640.0 1002.0,636.0 986.0,640.0" fill="url(#prt)" />
<polyline points="1012.5,640.0 1080.0,672.5" fill="none" stroke="#3a3a3a" stroke-width="0.5" stroke-linejoin="round" />
<polyline points="1090.0,677.0 1157.5,709.5" fill="none" stroke="#3a3a3a" stroke-width="0.5" stroke-linejoin="round" />
<polyline points="1167.5,714.0 1200.0,725.0" fill="none" stroke="#3a3a3a" stroke-width="0.5" stroke-linejoin="round" />
<polyline points="1002.5,635.0 1012.5,640.0" fill="none" stroke="#3a3a3a" stroke-width="0.5" stroke-linejoin="round" />
<ellipse cx="1213" cy="710" rx="12.5" ry="23.5" transform="rotate(-8 1213 710)" fill="#dedede" stroke="#444" stroke-width="0.6"/>
<path d="M581.3,296.3 L659.0,273.8 Q675.2,270.3 687.7,270.7 Q704.3,272.8 712.8,285.1 Q722.8,296.8 729.1,311.3 L660.2,333.5 L655.0,350.0 L625.0,330.0 L600.1,312.0 L579.0,303.0 Z" fill="url(#sd1)" />
<path d="M659.0,273.8 Q675.2,270.3 687.7,270.7 Q704.3,272.8 712.8,285.1 Q722.8,296.8 729.1,311.3" fill="none" stroke="#444" stroke-width="0.6" stroke-linejoin="round" stroke-linecap="round" />
<path d="M658.3,332.6 L736.0,310.1 Q752.2,306.6 764.7,307.0 Q781.3,309.1 789.8,321.4 Q799.8,333.1 806.1,347.6 L737.2,369.8 L732.0,386.3 L702.0,366.3 L677.1,348.3 L656.0,339.3 Z" fill="url(#sd2)" />
<path d="M736.0,310.1 Q752.2,306.6 764.7,307.0 Q781.3,309.1 789.8,321.4 Q799.8,333.1 806.1,347.6" fill="none" stroke="#444" stroke-width="0.6" stroke-linejoin="round" stroke-linecap="round" />
<path d="M735.3,368.9 L813.0,346.4 Q829.2,342.9 841.7,343.3 Q858.3,345.4 866.8,357.7 Q876.8,369.4 883.1,383.9 L814.2,406.1 L809.0,422.6 L779.0,402.6 L754.1,384.6 L733.0,375.6 Z" fill="url(#sd3)" />
<path d="M813.0,346.4 Q829.2,342.9 841.7,343.3 Q858.3,345.4 866.8,357.7 Q876.8,369.4 883.1,383.9" fill="none" stroke="#444" stroke-width="0.6" stroke-linejoin="round" stroke-linecap="round" />
<path d="M812.3,405.2 L890.0,382.7 Q906.2,379.2 918.7,379.6 Q935.3,381.7 943.8,394.0 Q953.8,405.7 960.1,420.2 L891.2,442.4 L886.0,458.9 L856.0,438.9 L831.1,420.9 L810.0,411.9 Z" fill="url(#sd4)" />
<path d="M890.0,382.7 Q906.2,379.2 918.7,379.6 Q935.3,381.7 943.8,394.0 Q953.8,405.7 960.1,420.2" fill="none" stroke="#444" stroke-width="0.6" stroke-linejoin="round" stroke-linecap="round" />
<path d="M889.3,441.5 L967.0,419.0 Q983.2,415.5 995.7,415.9 Q1012.3,418.0 1020.8,430.3 Q1030.8,442.0 1037.1,456.5 L968.2,478.7 L963.0,495.2 L933.0,475.2 L908.1,457.2 L887.0,448.2 Z" fill="url(#sd5)" />
<path d="M967.0,419.0 Q983.2,415.5 995.7,415.9 Q1012.3,418.0 1020.8,430.3 Q1030.8,442.0 1037.1,456.5" fill="none" stroke="#444" stroke-width="0.6" stroke-linejoin="round" stroke-linecap="round" />
<polyline points="729.7,312.9 660.8,335.1" fill="none" stroke="#b4b4b4" stroke-width="1.0" stroke-linejoin="round" />
<polyline points="729.1,311.3 660.2,333.5" fill="none" stroke="#1e1e1e" stroke-width="2.2" stroke-linejoin="round" stroke-dasharray="1.3 1.1"/>
<polyline points="806.7,349.2 737.8,371.4" fill="none" stroke="#b4b4b4" stroke-width="1.0" stroke-linejoin="round" />
<polyline points="806.1,347.6 737.2,369.8" fill="none" stroke="#1e1e1e" stroke-width="2.2" stroke-linejoin="round" stroke-dasharray="1.3 1.1"/>
<polyline points="883.7,385.5 814.8,407.7" fill="none" stroke="#b4b4b4" stroke-width="1.0" stroke-linejoin="round" />
<polyline points="883.1,383.9 814.2,406.1" fill="none" stroke="#1e1e1e" stroke-width="2.2" stroke-linejoin="round" stroke-dasharray="1.3 1.1"/>
<polyline points="960.7,421.8 891.8,444.0" fill="none" stroke="#b4b4b4" stroke-width="1.0" stroke-linejoin="round" />
<polyline points="960.1,420.2 891.2,442.4" fill="none" stroke="#1e1e1e" stroke-width="2.2" stroke-linejoin="round" stroke-dasharray="1.3 1.1"/>
<polygon points="581.3,296.3 659.0,273.8 660.0,275.5 585.0,298.5" fill="#b9b9b9" />
<polyline points="583.0,297.8 660.0,275.3" fill="none" stroke="#444" stroke-width="0.7" stroke-linejoin="round" stroke-dasharray="1.5 1.5"/>
<polyline points="566.0,290.6 581.3,296.3 659.0,273.8" fill="none" stroke="#555" stroke-width="0.5" stroke-linejoin="round" />
<polygon points="962.0,471.0 1056.0,447.5 1078.0,470.0 1062.0,622.0 1002.0,633.0 990.0,640.0 980.0,600.0" fill="url(#bside)" />
<polyline points="979.8,517.8 1032.0,503.0" fill="none" stroke="#3a3a3a" stroke-width="0.6" stroke-linejoin="round" />
<polyline points="980.5,509.5 1033.0,494.5" fill="none" stroke="#3a3a3a" stroke-width="0.5" stroke-linejoin="round" stroke-dasharray="2 2"/>
<polyline points="986.3,586.5 1030.0,574.5" fill="none" stroke="#3a3a3a" stroke-width="0.6" stroke-linejoin="round" />
<polyline points="988.9,599.5 1033.0,587.5" fill="none" stroke="#3a3a3a" stroke-width="0.6" stroke-linejoin="round" />
<polyline points="963.9,471.3 1055.3,447.5" fill="none" stroke="#3a3a3a" stroke-width="0.6" stroke-linejoin="round" />
<polyline points="965.0,473.0 1055.0,449.5" fill="none" stroke="#3a3a3a" stroke-width="0.5" stroke-linejoin="round" stroke-dasharray="2 2"/>
<polygon points="565.5,290.5 581.3,296.3 582.0,300.5 578.0,300.0" fill="#8c8c8c" stroke="#555" stroke-width="0.4" stroke-linejoin="round" />
<polygon points="632.0,322.8 657.7,336.6 662.0,333.2 636.5,320.3" fill="#909090" stroke="#444" stroke-width="0.4" stroke-linejoin="round" />
<polygon points="709.0,359.1 734.7,372.9 739.0,369.5 713.5,356.6" fill="#909090" stroke="#444" stroke-width="0.4" stroke-linejoin="round" />
<polygon points="786.0,395.4 811.7,409.2 816.0,405.8 790.5,392.9" fill="#909090" stroke="#444" stroke-width="0.4" stroke-linejoin="round" />
<polygon points="863.0,431.7 888.7,445.5 893.0,442.1 867.5,429.2" fill="#909090" stroke="#444" stroke-width="0.4" stroke-linejoin="round" />
<polygon points="940.0,468.0 965.7,481.8 970.0,478.4 944.5,465.5" fill="#909090" stroke="#444" stroke-width="0.4" stroke-linejoin="round" />
<path d="M557.5,294.5 Q558,291.5 565,291 L580,299.4 Q590.8,297.3 598.8,298.8 Q611.1,301.3 615.1,306.3 Q624.6,313.8 632.6,323.8 L657.0,335.7 Q667.8,333.6 675.8,335.1 Q688.1,337.6 692.1,342.6 Q701.6,350.1 709.6,360.1 L734.0,372.0 Q744.8,369.9 752.8,371.4 Q765.1,373.9 769.1,378.9 Q778.6,386.4 786.6,396.4 L811.0,408.3 Q821.8,406.2 829.8,407.7 Q842.1,410.2 846.1,415.2 Q855.6,422.7 863.6,432.7 L888.0,444.6 Q898.8,442.5 906.8,444.0 Q919.1,446.5 923.1,451.5 Q932.6,459.0 940.6,469.0 L965.0,480.9 L962.6,471.9 Q968,474 969,482 L975,546 L983.5,633 Q984,646 978,646 L973.3,645.2 Q966.3,641.2 961.3,640.7 Q954.7,644.3 950.7,642.8 Q934.0,641.7 924.7,635.2 Q917.0,626.2 911.0,621.2 L896.3,608.9 Q889.3,604.9 884.3,604.4 Q877.7,608.0 873.7,606.5 Q857.0,605.4 847.7,598.9 Q840.0,589.9 834.0,584.9 L819.3,572.6 Q812.3,568.6 807.3,568.1 Q800.7,571.7 796.7,570.2 Q780.0,569.1 770.7,562.6 Q763.0,553.6 757.0,548.6 L742.3,536.3 Q735.3,532.3 730.3,531.8 Q723.7,535.4 719.7,533.9 Q703.0,532.8 693.7,526.3 Q686.0,517.3 680.0,512.3 L665.3,500.0 Q658.3,496.0 653.3,495.5 Q646.7,499.1 642.7,497.6 Q626.0,496.5 616.7,490.0 Q609.0,481.0 603.0,476.0 Q597.6,472.4 588,468.5 Q575,463 572.5,451 L566.3,396 L557.5,300 Z" fill="url(#gsk)" stroke="#555" stroke-width="0.6" stroke-linejoin="round" stroke-linecap="round" />
<polygon points="962.6,471.9 967.5,471.0 973.0,478.0 977.0,490.0 983.0,546.0 990.5,631.0 986.0,647.5 978.0,646.0 984.0,640.0 975.0,546.0 969.0,482.0" fill="#c0c0c0" stroke="#555" stroke-width="0.5" stroke-linejoin="round" />
<ellipse cx="615.0" cy="398.3" rx="33.5" ry="71.5" transform="rotate(-16.6 615.0 398.3)" fill="url(#bg1)" stroke="#333" stroke-width="0.7"/>
<ellipse cx="692.0" cy="434.6" rx="33.5" ry="71.5" transform="rotate(-16.6 692.0 434.6)" fill="url(#bg2)" stroke="#333" stroke-width="0.7"/>
<ellipse cx="769.0" cy="470.9" rx="33.5" ry="71.5" transform="rotate(-16.6 769.0 470.9)" fill="url(#bg3)" stroke="#333" stroke-width="0.7"/>
<ellipse cx="846.0" cy="507.2" rx="33.5" ry="71.5" transform="rotate(-16.6 846.0 507.2)" fill="url(#bg4)" stroke="#333" stroke-width="0.7"/>
<ellipse cx="923.0" cy="543.5" rx="33.5" ry="71.5" transform="rotate(-16.6 923.0 543.5)" fill="url(#bg5)" stroke="#333" stroke-width="0.7"/>
<ellipse cx="569.4" cy="317.5" rx="4.8" ry="9.2" transform="rotate(-12 569.4 317.5)" fill="url(#hg)" stroke="#444" stroke-width="0.6"/>
<ellipse cx="582.5" cy="443.0" rx="4.8" ry="9.2" transform="rotate(-12 582.5 443.0)" fill="url(#hg)" stroke="#444" stroke-width="0.6"/>
<polygon points="582.5,315.7 595.1,321.9 584.4,327.6" fill="#bdbdbd" stroke="#444" stroke-width="0.5" stroke-linejoin="round" />
<polygon points="621.4,333.2 633.3,340.1 633.9,349.5" fill="#a6a6a6" stroke="#444" stroke-width="0.5" stroke-linejoin="round" />
<polygon points="595.7,446.7 608.8,461.1 598.2,457.4" fill="#a6a6a6" stroke="#444" stroke-width="0.5" stroke-linejoin="round" />
<polygon points="635.1,474.3 645.2,468.6 647.0,481.1" fill="#b0b0b0" stroke="#444" stroke-width="0.5" stroke-linejoin="round" />
<polygon points="643.3,368.3 655.8,373.9 651.4,390.2" fill="#a6a6a6" stroke="#444" stroke-width="0.5" stroke-linejoin="round" />
<polygon points="655.2,441.7 652.7,457.4 662.7,463.6" fill="#a6a6a6" stroke="#444" stroke-width="0.5" stroke-linejoin="round" />
<ellipse cx="646.4" cy="353.8" rx="4.8" ry="9.2" transform="rotate(-12 646.4 353.8)" fill="url(#hg)" stroke="#444" stroke-width="0.6"/>
<ellipse cx="659.5" cy="479.3" rx="4.8" ry="9.2" transform="rotate(-12 659.5 479.3)" fill="url(#hg)" stroke="#444" stroke-width="0.6"/>
<polygon points="659.5,352.0 672.1,358.2 661.4,363.9" fill="#bdbdbd" stroke="#444" stroke-width="0.5" stroke-linejoin="round" />
<polygon points="698.4,369.5 710.3,376.4 710.9,385.8" fill="#a6a6a6" stroke="#444" stroke-width="0.5" stroke-linejoin="round" />
<polygon points="672.7,483.0 685.8,497.4 675.2,493.7" fill="#a6a6a6" stroke="#444" stroke-width="0.5" stroke-linejoin="round" />
<polygon points="712.1,510.6 722.2,504.9 724.0,517.4" fill="#b0b0b0" stroke="#444" stroke-width="0.5" stroke-linejoin="round" />
<polygon points="720.3,404.6 732.8,410.2 728.4,426.5" fill="#a6a6a6" stroke="#444" stroke-width="0.5" stroke-linejoin="round" />
<polygon points="732.2,478.0 729.7,493.7 739.7,499.9" fill="#a6a6a6" stroke="#444" stroke-width="0.5" stroke-linejoin="round" />
<ellipse cx="723.4" cy="390.1" rx="4.8" ry="9.2" transform="rotate(-12 723.4 390.1)" fill="url(#hg)" stroke="#444" stroke-width="0.6"/>
<ellipse cx="736.5" cy="515.6" rx="4.8" ry="9.2" transform="rotate(-12 736.5 515.6)" fill="url(#hg)" stroke="#444" stroke-width="0.6"/>
<polygon points="736.5,388.3 749.1,394.5 738.4,400.2" fill="#bdbdbd" stroke="#444" stroke-width="0.5" stroke-linejoin="round" />
<polygon points="775.4,405.8 787.3,412.7 787.9,422.1" fill="#a6a6a6" stroke="#444" stroke-width="0.5" stroke-linejoin="round" />
<polygon points="749.7,519.3 762.8,533.7 752.2,530.0" fill="#a6a6a6" stroke="#444" stroke-width="0.5" stroke-linejoin="round" />
<polygon points="789.1,546.9 799.2,541.2 801.0,553.7" fill="#b0b0b0" stroke="#444" stroke-width="0.5" stroke-linejoin="round" />
<polygon points="797.3,440.9 809.8,446.5 805.4,462.8" fill="#a6a6a6" stroke="#444" stroke-width="0.5" stroke-linejoin="round" />
<polygon points="809.2,514.3 806.7,530.0 816.7,536.2" fill="#a6a6a6" stroke="#444" stroke-width="0.5" stroke-linejoin="round" />
<ellipse cx="800.4" cy="426.4" rx="4.8" ry="9.2" transform="rotate(-12 800.4 426.4)" fill="url(#hg)" stroke="#444" stroke-width="0.6"/>
<ellipse cx="813.5" cy="551.9" rx="4.8" ry="9.2" transform="rotate(-12 813.5 551.9)" fill="url(#hg)" stroke="#444" stroke-width="0.6"/>
<polygon points="813.5,424.6 826.1,430.8 815.4,436.5" fill="#bdbdbd" stroke="#444" stroke-width="0.5" stroke-linejoin="round" />
<polygon points="852.4,442.1 864.3,449.0 864.9,458.4" fill="#a6a6a6" stroke="#444" stroke-width="0.5" stroke-linejoin="round" />
<polygon points="826.7,555.6 839.8,570.0 829.2,566.3" fill="#a6a6a6" stroke="#444" stroke-width="0.5" stroke-linejoin="round" />
<polygon points="866.1,583.2 876.2,577.5 878.0,590.0" fill="#b0b0b0" stroke="#444" stroke-width="0.5" stroke-linejoin="round" />
<polygon points="874.3,477.2 886.8,482.8 882.4,499.1" fill="#a6a6a6" stroke="#444" stroke-width="0.5" stroke-linejoin="round" />
<polygon points="886.2,550.6 883.7,566.3 893.7,572.5" fill="#a6a6a6" stroke="#444" stroke-width="0.5" stroke-linejoin="round" />
<ellipse cx="877.4" cy="462.7" rx="4.8" ry="9.2" transform="rotate(-12 877.4 462.7)" fill="url(#hg)" stroke="#444" stroke-width="0.6"/>
<ellipse cx="890.5" cy="588.2" rx="4.8" ry="9.2" transform="rotate(-12 890.5 588.2)" fill="url(#hg)" stroke="#444" stroke-width="0.6"/>
<polygon points="890.5,460.9 903.1,467.1 892.4,472.8" fill="#bdbdbd" stroke="#444" stroke-width="0.5" stroke-linejoin="round" />
<polygon points="929.4,478.4 941.3,485.3 941.9,494.7" fill="#a6a6a6" stroke="#444" stroke-width="0.5" stroke-linejoin="round" />
<polygon points="903.7,591.9 916.8,606.3 906.2,602.6" fill="#a6a6a6" stroke="#444" stroke-width="0.5" stroke-linejoin="round" />
<polygon points="943.1,619.5 953.2,613.8 955.0,626.3" fill="#b0b0b0" stroke="#444" stroke-width="0.5" stroke-linejoin="round" />
<ellipse cx="954.4" cy="499.0" rx="4.8" ry="9.2" transform="rotate(-12 954.4 499.0)" fill="url(#hg)" stroke="#444" stroke-width="0.6"/>
<ellipse cx="967.5" cy="624.5" rx="4.8" ry="9.2" transform="rotate(-12 967.5 624.5)" fill="url(#hg)" stroke="#444" stroke-width="0.6"/>
<g clip-path="url(#bc2)">
<ellipse cx="694.5" cy="435.4" rx="33.2" ry="71.2" transform="rotate(-16.6 694.5 435.4)" fill="none" stroke="#555" stroke-width="0.6" stroke-dasharray="none"/>
<ellipse cx="697.0" cy="436.1" rx="33.2" ry="71.2" transform="rotate(-16.6 697.0 436.1)" fill="none" stroke="#444" stroke-width="1.0" stroke-dasharray="2 1.2"/>
<ellipse cx="699.5" cy="436.9" rx="33.2" ry="71.2" transform="rotate(-16.6 699.5 436.9)" fill="none" stroke="#555" stroke-width="0.6" stroke-dasharray="none"/>
<ellipse cx="701.0" cy="437.6" rx="29" ry="68" transform="rotate(-16.6 701.0 437.6)" fill="url(#pf2)" stroke="#333" stroke-width="0.7"/>
<polyline points="665.0,410.6 708.0,429.1" fill="none" stroke="#3a3a3a" stroke-width="0.6" stroke-linejoin="round" />
<polyline points="708.0,429.1 714.0,420.6" fill="none" stroke="#3a3a3a" stroke-width="0.6" stroke-linejoin="round" />
<polyline points="668.0,443.6 711.0,461.6" fill="none" stroke="#3a3a3a" stroke-width="0.6" stroke-linejoin="round" />
<polyline points="708.0,429.1 713.0,466.6" fill="none" stroke="#3a3a3a" stroke-width="0.5" stroke-linejoin="round" />
<polyline points="711.0,430.6 717.0,464.6" fill="none" stroke="#3a3a3a" stroke-width="0.5" stroke-linejoin="round" />
<path d="M680.0,374.6 Q684.0,382.6 687.0,388.6 L691.0,388.1 Q694.0,379.6 701.0,381.6" fill="none" stroke="#333" stroke-width="0.7" stroke-linejoin="round" stroke-linecap="round" />
<path d="M687.0,388.6 L688.0,392.6 L692.0,391.6 L691.0,388.1" fill="#f0f0f0" stroke="#444" stroke-width="0.5" stroke-linejoin="round" stroke-linecap="round" />
<path d="M684.0,476.6 Q694.0,488.6 704.0,485.6 L709.0,477.6 Q714.0,492.6 725.0,496.6 L722.0,502.6 Q710.0,496.6 707.0,486.6 L704.0,490.6 Q692.0,492.6 682.0,480.6Z" fill="#aaaaaa" stroke="#444" stroke-width="0.5" stroke-linejoin="round" stroke-linecap="round" />
</g>
<g clip-path="url(#bc4)">
<ellipse cx="880.0" cy="527.2" rx="33.2" ry="71.2" transform="rotate(-16.6 880.0 527.2)" fill="#a9a9a9"/>
<ellipse cx="884.0" cy="519.2" rx="33.2" ry="71.2" transform="rotate(-16.6 884.0 519.2)" fill="url(#pp4)" stroke="#333" stroke-width="0.7"/>
<ellipse cx="886.0" cy="519.6" rx="33.2" ry="71.2" transform="rotate(-16.6 886.0 519.6)" fill="none" stroke="#555" stroke-width="0.6" stroke-dasharray="none"/>
<ellipse cx="888.0" cy="520.0" rx="33.2" ry="71.2" transform="rotate(-16.6 888.0 520.0)" fill="none" stroke="#333" stroke-width="1.4" stroke-dasharray="1.2 1.2"/>
<ellipse cx="890.5" cy="520.5" rx="33.2" ry="71.2" transform="rotate(-16.6 890.5 520.5)" fill="none" stroke="#555" stroke-width="0.6" stroke-dasharray="none"/>
<polyline points="854.0,481.2 896.0,497.2" fill="none" stroke="#3a3a3a" stroke-width="0.6" stroke-linejoin="round" />
<polyline points="854.0,515.2 906.0,533.2" fill="none" stroke="#3a3a3a" stroke-width="0.6" stroke-linejoin="round" />
<polyline points="862.0,549.2 904.0,559.2" fill="none" stroke="#3a3a3a" stroke-width="0.5" stroke-linejoin="round" />
</g>
<ellipse cx="846.0" cy="507.2" rx="33.5" ry="71.5" transform="rotate(-16.6 846.0 507.2)" fill="none" stroke="#333" stroke-width="0.7"/>
<g clip-path="url(#bc5)">
<ellipse cx="969.0" cy="567.5" rx="33.2" ry="71.2" transform="rotate(-16.6 969.0 567.5)" fill="#a9a9a9"/>
<ellipse cx="973.0" cy="559.5" rx="33.2" ry="71.2" transform="rotate(-16.6 973.0 559.5)" fill="url(#pp5)" stroke="#333" stroke-width="0.7"/>
<ellipse cx="975.0" cy="559.9" rx="33.2" ry="71.2" transform="rotate(-16.6 975.0 559.9)" fill="none" stroke="#555" stroke-width="0.6" stroke-dasharray="none"/>
<ellipse cx="977.0" cy="560.3" rx="33.2" ry="71.2" transform="rotate(-16.6 977.0 560.3)" fill="none" stroke="#333" stroke-width="1.4" stroke-dasharray="1.2 1.2"/>
<ellipse cx="979.5" cy="560.8" rx="33.2" ry="71.2" transform="rotate(-16.6 979.5 560.8)" fill="none" stroke="#555" stroke-width="0.6" stroke-dasharray="none"/>
<polyline points="943.0,521.5 985.0,537.5" fill="none" stroke="#3a3a3a" stroke-width="0.6" stroke-linejoin="round" />
<polyline points="943.0,555.5 995.0,573.5" fill="none" stroke="#3a3a3a" stroke-width="0.6" stroke-linejoin="round" />
<polyline points="951.0,589.5 993.0,599.5" fill="none" stroke="#3a3a3a" stroke-width="0.5" stroke-linejoin="round" />
</g>
<ellipse cx="923.0" cy="543.5" rx="33.5" ry="71.5" transform="rotate(-16.6 923.0 543.5)" fill="none" stroke="#333" stroke-width="0.7"/>
<polygon points="1055.0,445.0 1160.0,400.0 1250.0,640.0 1228.0,700.0 1100.0,660.0 1058.0,640.0" fill="#d2d2d2" />
<polygon points="1060.0,560.0 1110.0,590.0 1180.0,640.0 1100.0,650.0" fill="#dcdcdc" />
<polygon points="1050.0,470.0 1095.0,455.0 1100.0,520.0 1060.0,540.0" fill="#b4b4b4" />
<polygon points="1052.0,478.0 1078.0,470.0 1062.0,535.0" fill="#a2a2a2" stroke="#555" stroke-width="0.5" stroke-linejoin="round" />
<polygon points="1135.0,651.0 1190.0,654.0 1224.0,679.0 1223.0,689.0" fill="#a4a4a4" stroke="#555" stroke-width="0.4" stroke-linejoin="round" />
<ellipse cx="1201.6" cy="630.5" rx="12.5" ry="13.5" fill="url(#idl)" stroke="#444" stroke-width="0.6"/>
<ellipse cx="1200" cy="636" rx="16" ry="17" fill="none" stroke="#666" stroke-width="0.5"/>
<ellipse cx="1131.0" cy="531.2" rx="48.5" ry="61.0" transform="rotate(21.6 1131.0 531.2)" fill="#bdbdbd" />
<ellipse cx="1131.0" cy="531.2" rx="45.5" ry="58.0" transform="rotate(21.6 1131.0 531.2)" fill="none" stroke="#d9d9d9" stroke-width="6" />
<ellipse cx="1131.0" cy="531.2" rx="45.5" ry="58.0" transform="rotate(21.6 1131.0 531.2)" fill="none" stroke="#3c3c3c" stroke-width="6" stroke-dasharray="1.2 1.5"/>
<ellipse cx="1131.0" cy="531.2" rx="42.0" ry="54.5" transform="rotate(21.6 1131.0 531.2)" fill="#c9c9c9" stroke="#555" stroke-width="0.5" />
<ellipse cx="1133.0" cy="531.2" rx="26.5" ry="35.0" transform="rotate(21.6 1133.0 531.2)" fill="#d6d6d6" stroke="#555" stroke-width="0.5" />
<polyline points="1123.0,491.2 1137.0,575.2" fill="none" stroke="#666" stroke-width="0.6" stroke-linejoin="round" />
<polyline points="1101.0,521.2 1165.0,537.2" fill="none" stroke="#666" stroke-width="0.6" stroke-linejoin="round" />
<polygon points="1126.5,430.2 1133.0,430.2 1116.0,470.2 1109.0,469.2" fill="#ababab" stroke="#444" stroke-width="0.5" stroke-linejoin="round" />
<polygon points="1145.3,437.6 1132.8,457.7 1147.8,460.2" fill="#ececec" stroke="#444" stroke-width="0.5" stroke-linejoin="round" />
<ellipse cx="1328.7" cy="675.3" rx="48.5" ry="61.0" transform="rotate(21.6 1328.7 675.3)" fill="#bdbdbd" />
<ellipse cx="1328.7" cy="675.3" rx="45.5" ry="58.0" transform="rotate(21.6 1328.7 675.3)" fill="none" stroke="#d9d9d9" stroke-width="6" />
<ellipse cx="1328.7" cy="675.3" rx="45.5" ry="58.0" transform="rotate(21.6 1328.7 675.3)" fill="none" stroke="#3c3c3c" stroke-width="6" stroke-dasharray="1.2 1.5"/>
<ellipse cx="1328.7" cy="675.3" rx="42.0" ry="54.5" transform="rotate(21.6 1328.7 675.3)" fill="#c9c9c9" stroke="#555" stroke-width="0.5" />
<ellipse cx="1330.7" cy="675.3" rx="26.5" ry="35.0" transform="rotate(21.6 1330.7 675.3)" fill="#d6d6d6" stroke="#555" stroke-width="0.5" />
<polyline points="1320.7,635.3 1334.7,719.3" fill="none" stroke="#666" stroke-width="0.6" stroke-linejoin="round" />
<polyline points="1298.7,665.3 1362.7,681.3" fill="none" stroke="#666" stroke-width="0.6" stroke-linejoin="round" />
<polygon points="1324.2,574.3 1330.7,574.3 1313.7,614.3 1306.7,613.3" fill="#ababab" stroke="#444" stroke-width="0.5" stroke-linejoin="round" />
<polygon points="1343.0,581.7 1330.5,601.8 1345.5,604.3" fill="#ececec" stroke="#444" stroke-width="0.5" stroke-linejoin="round" />
<ellipse cx="1306.0" cy="485.0" rx="65.5" ry="81.7" transform="rotate(21.6 1306.0 485.0)" fill="#b4b4b4" />
<ellipse cx="1306.0" cy="485.0" rx="62.5" ry="78.7" transform="rotate(21.6 1306.0 485.0)" fill="none" stroke="#383838" stroke-width="6" stroke-dasharray="1.4 1.6"/>
<ellipse cx="1311.5" cy="484.5" rx="65.5" ry="81.7" transform="rotate(21.6 1311.5 484.5)" fill="#c6c5c5" />
<ellipse cx="1311.5" cy="484.5" rx="62.2" ry="78.4" transform="rotate(21.6 1311.5 484.5)" fill="none" stroke="#dadada" stroke-width="6.6" />
<ellipse cx="1311.5" cy="484.5" rx="62.2" ry="78.4" transform="rotate(21.6 1311.5 484.5)" fill="none" stroke="url(#tg2)" stroke-width="6.6" stroke-dasharray="1.2 1.6"/>
<ellipse cx="1311.5" cy="484.5" rx="59.0" ry="75.2" transform="rotate(21.6 1311.5 484.5)" fill="none" stroke="#444" stroke-width="0.6" />
<ellipse cx="1312.5" cy="485.5" rx="54.5" ry="68.7" transform="rotate(21.6 1312.5 485.5)" fill="url(#g2r)" stroke="#444" stroke-width="0.6" />
<ellipse cx="1315.5" cy="486.5" rx="52.5" ry="65.7" transform="rotate(21.6 1315.5 486.5)" fill="#c7c7c7" stroke="#555" stroke-width="0.5" />
<ellipse cx="1303.8" cy="440.6" rx="6.6" ry="7.6" fill="url(#blt)" stroke="#555" stroke-width="0.5"/>
<ellipse cx="1340.1" cy="438" rx="6.6" ry="7.6" fill="url(#blt)" stroke="#555" stroke-width="0.5"/>
<ellipse cx="1363.4" cy="465.6" rx="6.6" ry="7.6" fill="url(#blt)" stroke="#555" stroke-width="0.5"/>
<ellipse cx="1360.2" cy="506.7" rx="6.6" ry="7.6" fill="url(#blt)" stroke="#555" stroke-width="0.5"/>
<ellipse cx="1332" cy="538.1" rx="6.6" ry="7.6" fill="url(#blt)" stroke="#555" stroke-width="0.5"/>
<ellipse cx="1296" cy="540.2" rx="6.6" ry="7.6" fill="url(#blt)" stroke="#555" stroke-width="0.5"/>
<ellipse cx="1272.1" cy="512.6" rx="6.6" ry="7.6" fill="url(#blt)" stroke="#555" stroke-width="0.5"/>
<ellipse cx="1275.9" cy="471.7" rx="6.6" ry="7.6" fill="url(#blt)" stroke="#555" stroke-width="0.5"/>
<ellipse cx="1318.3" cy="488.3" rx="38.0" ry="43.5" transform="rotate(15 1318.3 488.3)" fill="#c9c9c9" stroke="#444" stroke-width="0.6" />
<ellipse cx="1319.3" cy="488.3" rx="33.0" ry="37.0" transform="rotate(15 1319.3 488.3)" fill="#c0c0c0" stroke="#444" stroke-width="0.6" />
<ellipse cx="1319.8" cy="488.3" rx="30.0" ry="34.5" transform="rotate(15 1319.8 488.3)" fill="#cfcfcf" stroke="#444" stroke-width="0.6" />
<ellipse cx="1319.3" cy="488.8" rx="25.0" ry="29.0" transform="rotate(15 1319.3 488.8)" fill="#b5b5b5" stroke="#333" stroke-width="0.7" />
<ellipse cx="1318.3" cy="489.3" rx="21.7" ry="24.5" transform="rotate(15 1318.3 489.3)" fill="url(#shf)" stroke="#333" stroke-width="0.7" />
<path d="M1326,466 Q1342,487 1326,512 Q1336,487 1326,466Z" fill="#9d9d9d" />
<path d="M1324,466 Q1338,487 1324,512" fill="none" stroke="#444" stroke-width="0.6" stroke-linejoin="round" stroke-linecap="round" />
<ellipse cx="1304.5" cy="483.5" rx="4" ry="4.6" fill="#e4e4e4" stroke="#444" stroke-width="0.5"/>
<ellipse cx="1130.0" cy="528.3" rx="99.5" ry="123.4" transform="rotate(21.6 1130.0 528.3)" fill="none" stroke="#b4b4b4" stroke-width="9" />
<ellipse cx="1130.0" cy="528.3" rx="100.2" ry="124.1" transform="rotate(21.6 1130.0 528.3)" fill="none" stroke="#383838" stroke-width="7.6" stroke-dasharray="1.4 1.6"/>
<path d="M1234.2,566.1 L1227.2,581.3 L1218.7,595.6 L1208.8,608.7 L1197.7,620.4 L1185.6,630.6 L1172.6,639.0 L1159.0,645.5 L1145.1,649.9 L1131.0,652.3 L1117.0,652.6 L1103.4,650.7 L1090.4,646.7 L1078.2,640.7 L1067.0,632.8 L1057.0,623.0 L1048.4,611.6 L1041.3,598.8 L1035.8,584.8 L1032.1,569.8 L1030.2,554.1 L1030.1,537.9 L1031.9,521.6 L1035.5,505.4 L1040.8,489.5 L1047.8,474.3 L1056.3,460.0 L1066.2,446.9 L1077.3,435.2 L1089.4,425.0 L1102.4,416.6 L1116.0,410.1 L1129.9,405.7 L1144.0,403.3 L1158.0,403.0 L1171.6,404.9 L1184.6,408.9 L1196.8,414.9 L1208.0,422.8 L1218.0,432.6 L1226.6,444.0 L1233.7,456.8 L1239.2,470.8 L1242.9,485.8 L1244.8,501.5 L1244.9,517.7 L1243.1,534.0 L1239.5,550.2Z M1165.0,470.7 L1166.5,466.4 L1167.4,461.9 L1167.9,457.4 L1167.9,453.0 L1167.4,448.6 L1166.4,444.5 L1164.9,440.7 L1162.9,437.1 L1160.5,434.0 L1157.8,431.3 L1154.7,429.2 L1151.3,427.5 L1147.8,426.4 L1144.0,425.9 L1140.2,426.0 L1136.3,426.6 L1132.5,427.8 L1128.8,429.6 L1125.2,431.9 L1121.8,434.7 L1118.8,438.0 L1116.1,441.6 L1113.7,445.5 L1111.8,449.7 L1110.3,454.0 L1109.4,458.5 L1108.9,463.0 L1108.9,467.4 L1109.4,471.8 L1110.4,475.9 L1111.9,479.7 L1113.9,483.3 L1116.3,486.4 L1119.0,489.1 L1122.1,491.2 L1125.5,492.9 L1129.0,494.0 L1132.8,494.5 L1136.6,494.4 L1140.5,493.8 L1144.3,492.6 L1148.0,490.8 L1151.6,488.5 L1155.0,485.7 L1158.0,482.4 L1160.7,478.8 L1163.1,474.9Z M1222.9,508.9 L1224.4,504.6 L1225.3,500.1 L1225.8,495.6 L1225.8,491.2 L1225.3,486.8 L1224.3,482.7 L1222.8,478.9 L1220.8,475.3 L1218.4,472.2 L1215.7,469.5 L1212.6,467.4 L1209.2,465.7 L1205.7,464.6 L1201.9,464.1 L1198.1,464.2 L1194.2,464.8 L1190.4,466.0 L1186.7,467.8 L1183.1,470.1 L1179.7,472.9 L1176.7,476.2 L1174.0,479.8 L1171.6,483.7 L1169.7,487.9 L1168.2,492.2 L1167.3,496.7 L1166.8,501.2 L1166.8,505.6 L1167.3,510.0 L1168.3,514.1 L1169.8,517.9 L1171.8,521.5 L1174.2,524.6 L1176.9,527.3 L1180.0,529.4 L1183.4,531.1 L1186.9,532.2 L1190.7,532.7 L1194.5,532.6 L1198.4,532.0 L1202.2,530.8 L1205.9,529.0 L1209.5,526.7 L1212.9,523.9 L1215.9,520.6 L1218.6,517.0 L1221.0,513.1Z M1199.0,589.3 L1200.5,585.0 L1201.4,580.5 L1201.9,576.0 L1201.9,571.6 L1201.4,567.2 L1200.4,563.1 L1198.9,559.3 L1196.9,555.7 L1194.5,552.6 L1191.8,549.9 L1188.7,547.8 L1185.3,546.1 L1181.8,545.0 L1178.0,544.5 L1174.2,544.6 L1170.3,545.2 L1166.5,546.4 L1162.8,548.2 L1159.2,550.5 L1155.8,553.3 L1152.8,556.6 L1150.1,560.2 L1147.7,564.1 L1145.8,568.3 L1144.3,572.6 L1143.4,577.1 L1142.9,581.6 L1142.9,586.0 L1143.4,590.4 L1144.4,594.5 L1145.9,598.3 L1147.9,601.9 L1150.3,605.0 L1153.0,607.7 L1156.1,609.8 L1159.5,611.5 L1163.0,612.6 L1166.8,613.1 L1170.6,613.0 L1174.5,612.4 L1178.3,611.2 L1182.0,609.4 L1185.6,607.1 L1189.0,604.3 L1192.0,601.0 L1194.7,597.4 L1197.1,593.5Z M1126.8,600.2 L1128.3,595.9 L1129.2,591.4 L1129.7,586.9 L1129.7,582.5 L1129.2,578.1 L1128.2,574.0 L1126.7,570.2 L1124.7,566.6 L1122.3,563.5 L1119.6,560.8 L1116.5,558.7 L1113.1,557.0 L1109.6,555.9 L1105.8,555.4 L1102.0,555.5 L1098.1,556.1 L1094.3,557.3 L1090.6,559.1 L1087.0,561.4 L1083.6,564.2 L1080.6,567.5 L1077.9,571.1 L1075.5,575.0 L1073.6,579.2 L1072.1,583.5 L1071.2,588.0 L1070.7,592.5 L1070.7,596.9 L1071.2,601.3 L1072.2,605.4 L1073.7,609.2 L1075.7,612.8 L1078.1,615.9 L1080.8,618.6 L1083.9,620.7 L1087.3,622.4 L1090.8,623.5 L1094.6,624.0 L1098.4,623.9 L1102.3,623.3 L1106.1,622.1 L1109.8,620.3 L1113.4,618.0 L1116.8,615.2 L1119.8,611.9 L1122.5,608.3 L1124.9,604.4Z M1105.2,527.0 L1106.7,522.7 L1107.6,518.2 L1108.1,513.7 L1108.1,509.3 L1107.6,504.9 L1106.6,500.8 L1105.1,497.0 L1103.1,493.4 L1100.7,490.3 L1098.0,487.6 L1094.9,485.5 L1091.5,483.8 L1088.0,482.7 L1084.2,482.2 L1080.4,482.3 L1076.5,482.9 L1072.7,484.1 L1069.0,485.9 L1065.4,488.2 L1062.0,491.0 L1059.0,494.3 L1056.3,497.9 L1053.9,501.8 L1052.0,506.0 L1050.5,510.3 L1049.6,514.8 L1049.1,519.3 L1049.1,523.7 L1049.6,528.1 L1050.6,532.2 L1052.1,536.0 L1054.1,539.6 L1056.5,542.7 L1059.2,545.4 L1062.3,547.5 L1065.7,549.2 L1069.2,550.3 L1073.0,550.8 L1076.8,550.7 L1080.7,550.1 L1084.5,548.9 L1088.2,547.1 L1091.8,544.8 L1095.2,542.0 L1098.2,538.7 L1100.9,535.1 L1103.3,531.2Z" fill="#c5c4c4" fill-rule="evenodd"/>
<path d="M1165.9,471.1 L1163.9,475.4 L1161.5,479.4 L1158.7,483.1 L1155.6,486.5 L1152.1,489.3 L1148.4,491.7 L1144.6,493.5 L1140.6,494.8 L1136.6,495.4 L1132.7,495.5 L1128.8,495.0 L1125.1,493.8 L1121.6,492.1 L1118.4,489.9 L1115.6,487.1 L1113.1,483.9 L1111.1,480.2 L1109.5,476.3 L1108.5,472.0 L1107.9,467.6 L1107.9,463.0 L1108.4,458.4 L1109.4,453.8 L1110.9,449.3 L1112.9,445.0 L1115.3,441.0 L1118.1,437.3 L1121.2,433.9 L1124.7,431.1 L1128.4,428.7 L1132.2,426.9 L1136.2,425.6 L1140.2,425.0 L1144.1,424.9 L1148.0,425.4 L1151.7,426.6 L1155.2,428.3 L1158.4,430.5 L1161.2,433.3 L1163.7,436.5 L1165.7,440.2 L1167.3,444.1 L1168.3,448.4 L1168.9,452.8 L1168.9,457.4 L1168.4,462.0 L1167.4,466.6Z M1168.4,470.1 L1169.9,465.8 L1170.8,461.3 L1171.3,456.8 L1171.3,452.4 L1170.8,448.0 L1169.8,443.9 L1168.3,440.1 L1166.3,436.5 L1163.9,433.4 L1161.2,430.7 L1158.1,428.6 L1154.7,426.9 L1151.2,425.8 L1147.4,425.3 L1143.6,425.4 L1139.7,426.0 L1135.9,427.2 L1132.2,429.0 L1128.6,431.3 L1125.2,434.1 L1122.2,437.4 L1119.5,441.0 L1117.1,444.9 L1115.2,449.1 L1113.7,453.4 L1112.8,457.9 L1112.3,462.4 L1112.3,466.8 L1112.8,471.2 L1113.8,475.3 L1115.3,479.1 L1117.3,482.7 L1119.7,485.8 L1122.4,488.5 L1125.5,490.6 L1128.9,492.3 L1132.4,493.4 L1136.2,493.9 L1140.0,493.8 L1143.9,493.2 L1147.7,492.0 L1151.4,490.2 L1155.0,487.9 L1158.4,485.1 L1161.4,481.8 L1164.1,478.2 L1166.5,474.3Z" fill="#b3b3b3" fill-rule="evenodd" clip-path="url(#ah0)"/>
<ellipse cx="1141.8" cy="459.6" rx="28.6" ry="35.2" transform="rotate(21.6 1141.8 459.6)" fill="none" stroke="#444" stroke-width="0.5" clip-path="url(#ah0)"/>
<ellipse cx="1138.4" cy="460.2" rx="28.6" ry="35.2" transform="rotate(21.6 1138.4 460.2)" fill="none" stroke="#333" stroke-width="0.7" />
<path d="M1223.8,509.3 L1221.8,513.6 L1219.4,517.6 L1216.6,521.3 L1213.5,524.7 L1210.0,527.5 L1206.3,529.9 L1202.5,531.7 L1198.5,533.0 L1194.5,533.6 L1190.6,533.7 L1186.7,533.2 L1183.0,532.0 L1179.5,530.3 L1176.3,528.1 L1173.5,525.3 L1171.0,522.1 L1169.0,518.4 L1167.4,514.5 L1166.4,510.2 L1165.8,505.8 L1165.8,501.2 L1166.3,496.6 L1167.3,492.0 L1168.8,487.5 L1170.8,483.2 L1173.2,479.2 L1176.0,475.5 L1179.1,472.1 L1182.6,469.3 L1186.3,466.9 L1190.1,465.1 L1194.1,463.8 L1198.1,463.2 L1202.0,463.1 L1205.9,463.6 L1209.6,464.8 L1213.1,466.5 L1216.3,468.7 L1219.1,471.5 L1221.6,474.7 L1223.6,478.4 L1225.2,482.3 L1226.2,486.6 L1226.8,491.0 L1226.8,495.6 L1226.3,500.2 L1225.3,504.8Z M1226.3,508.3 L1227.8,504.0 L1228.7,499.5 L1229.2,495.0 L1229.2,490.6 L1228.7,486.2 L1227.7,482.1 L1226.2,478.3 L1224.2,474.7 L1221.8,471.6 L1219.1,468.9 L1216.0,466.8 L1212.6,465.1 L1209.1,464.0 L1205.3,463.5 L1201.5,463.6 L1197.6,464.2 L1193.8,465.4 L1190.1,467.2 L1186.5,469.5 L1183.1,472.3 L1180.1,475.6 L1177.4,479.2 L1175.0,483.1 L1173.1,487.3 L1171.6,491.6 L1170.7,496.1 L1170.2,500.6 L1170.2,505.0 L1170.7,509.4 L1171.7,513.5 L1173.2,517.3 L1175.2,520.9 L1177.6,524.0 L1180.3,526.7 L1183.4,528.8 L1186.8,530.5 L1190.3,531.6 L1194.1,532.1 L1197.9,532.0 L1201.8,531.4 L1205.6,530.2 L1209.3,528.4 L1212.9,526.1 L1216.3,523.3 L1219.3,520.0 L1222.0,516.4 L1224.4,512.5Z" fill="#b3b3b3" fill-rule="evenodd" clip-path="url(#ah1)"/>
<ellipse cx="1199.7" cy="497.8" rx="28.6" ry="35.2" transform="rotate(21.6 1199.7 497.8)" fill="none" stroke="#444" stroke-width="0.5" clip-path="url(#ah1)"/>
<ellipse cx="1196.3" cy="498.4" rx="28.6" ry="35.2" transform="rotate(21.6 1196.3 498.4)" fill="none" stroke="#333" stroke-width="0.7" />
<path d="M1199.9,589.7 L1197.9,594.0 L1195.5,598.0 L1192.7,601.7 L1189.6,605.1 L1186.1,607.9 L1182.4,610.3 L1178.6,612.1 L1174.6,613.4 L1170.6,614.0 L1166.7,614.1 L1162.8,613.6 L1159.1,612.4 L1155.6,610.7 L1152.4,608.5 L1149.6,605.7 L1147.1,602.5 L1145.1,598.8 L1143.5,594.9 L1142.5,590.6 L1141.9,586.2 L1141.9,581.6 L1142.4,577.0 L1143.4,572.4 L1144.9,567.9 L1146.9,563.6 L1149.3,559.6 L1152.1,555.9 L1155.2,552.5 L1158.7,549.7 L1162.4,547.3 L1166.2,545.5 L1170.2,544.2 L1174.2,543.6 L1178.1,543.5 L1182.0,544.0 L1185.7,545.2 L1189.2,546.9 L1192.4,549.1 L1195.2,551.9 L1197.7,555.1 L1199.7,558.8 L1201.3,562.7 L1202.3,567.0 L1202.9,571.4 L1202.9,576.0 L1202.4,580.6 L1201.4,585.2Z M1202.4,588.7 L1203.9,584.4 L1204.8,579.9 L1205.3,575.4 L1205.3,571.0 L1204.8,566.6 L1203.8,562.5 L1202.3,558.7 L1200.3,555.1 L1197.9,552.0 L1195.2,549.3 L1192.1,547.2 L1188.7,545.5 L1185.2,544.4 L1181.4,543.9 L1177.6,544.0 L1173.7,544.6 L1169.9,545.8 L1166.2,547.6 L1162.6,549.9 L1159.2,552.7 L1156.2,556.0 L1153.5,559.6 L1151.1,563.5 L1149.2,567.7 L1147.7,572.0 L1146.8,576.5 L1146.3,581.0 L1146.3,585.4 L1146.8,589.8 L1147.8,593.9 L1149.3,597.7 L1151.3,601.3 L1153.7,604.4 L1156.4,607.1 L1159.5,609.2 L1162.9,610.9 L1166.4,612.0 L1170.2,612.5 L1174.0,612.4 L1177.9,611.8 L1181.7,610.6 L1185.4,608.8 L1189.0,606.5 L1192.4,603.7 L1195.4,600.4 L1198.1,596.8 L1200.5,592.9Z" fill="#b3b3b3" fill-rule="evenodd" clip-path="url(#ah2)"/>
<ellipse cx="1175.8" cy="578.2" rx="28.6" ry="35.2" transform="rotate(21.6 1175.8 578.2)" fill="none" stroke="#444" stroke-width="0.5" clip-path="url(#ah2)"/>
<ellipse cx="1172.4" cy="578.8" rx="28.6" ry="35.2" transform="rotate(21.6 1172.4 578.8)" fill="none" stroke="#333" stroke-width="0.7" />
<path d="M1127.7,600.6 L1125.7,604.9 L1123.3,608.9 L1120.5,612.6 L1117.4,616.0 L1113.9,618.8 L1110.2,621.2 L1106.4,623.0 L1102.4,624.3 L1098.4,624.9 L1094.5,625.0 L1090.6,624.5 L1086.9,623.3 L1083.4,621.6 L1080.2,619.4 L1077.4,616.6 L1074.9,613.4 L1072.9,609.7 L1071.3,605.8 L1070.3,601.5 L1069.7,597.1 L1069.7,592.5 L1070.2,587.9 L1071.2,583.3 L1072.7,578.8 L1074.7,574.5 L1077.1,570.5 L1079.9,566.8 L1083.0,563.4 L1086.5,560.6 L1090.2,558.2 L1094.0,556.4 L1098.0,555.1 L1102.0,554.5 L1105.9,554.4 L1109.8,554.9 L1113.5,556.1 L1117.0,557.8 L1120.2,560.0 L1123.0,562.8 L1125.5,566.0 L1127.5,569.7 L1129.1,573.6 L1130.1,577.9 L1130.7,582.3 L1130.7,586.9 L1130.2,591.5 L1129.2,596.1Z M1130.2,599.6 L1131.7,595.3 L1132.6,590.8 L1133.1,586.3 L1133.1,581.9 L1132.6,577.5 L1131.6,573.4 L1130.1,569.6 L1128.1,566.0 L1125.7,562.9 L1123.0,560.2 L1119.9,558.1 L1116.5,556.4 L1113.0,555.3 L1109.2,554.8 L1105.4,554.9 L1101.5,555.5 L1097.7,556.7 L1094.0,558.5 L1090.4,560.8 L1087.0,563.6 L1084.0,566.9 L1081.3,570.5 L1078.9,574.4 L1077.0,578.6 L1075.5,582.9 L1074.6,587.4 L1074.1,591.9 L1074.1,596.3 L1074.6,600.7 L1075.6,604.8 L1077.1,608.6 L1079.1,612.2 L1081.5,615.3 L1084.2,618.0 L1087.3,620.1 L1090.7,621.8 L1094.2,622.9 L1098.0,623.4 L1101.8,623.3 L1105.7,622.7 L1109.5,621.5 L1113.2,619.7 L1116.8,617.4 L1120.2,614.6 L1123.2,611.3 L1125.9,607.7 L1128.3,603.8Z" fill="#b3b3b3" fill-rule="evenodd" clip-path="url(#ah3)"/>
<ellipse cx="1103.6" cy="589.1" rx="28.6" ry="35.2" transform="rotate(21.6 1103.6 589.1)" fill="none" stroke="#444" stroke-width="0.5" clip-path="url(#ah3)"/>
<ellipse cx="1100.2" cy="589.7" rx="28.6" ry="35.2" transform="rotate(21.6 1100.2 589.7)" fill="none" stroke="#333" stroke-width="0.7" />
<path d="M1106.1,527.4 L1104.1,531.7 L1101.7,535.7 L1098.9,539.4 L1095.8,542.8 L1092.3,545.6 L1088.6,548.0 L1084.8,549.8 L1080.8,551.1 L1076.8,551.7 L1072.9,551.8 L1069.0,551.3 L1065.3,550.1 L1061.8,548.4 L1058.6,546.2 L1055.8,543.4 L1053.3,540.2 L1051.3,536.5 L1049.7,532.6 L1048.7,528.3 L1048.1,523.9 L1048.1,519.3 L1048.6,514.7 L1049.6,510.1 L1051.1,505.6 L1053.1,501.3 L1055.5,497.3 L1058.3,493.6 L1061.4,490.2 L1064.9,487.4 L1068.6,485.0 L1072.4,483.2 L1076.4,481.9 L1080.4,481.3 L1084.3,481.2 L1088.2,481.7 L1091.9,482.9 L1095.4,484.6 L1098.6,486.8 L1101.4,489.6 L1103.9,492.8 L1105.9,496.5 L1107.5,500.4 L1108.5,504.7 L1109.1,509.1 L1109.1,513.7 L1108.6,518.3 L1107.6,522.9Z M1108.6,526.4 L1110.1,522.1 L1111.0,517.6 L1111.5,513.1 L1111.5,508.7 L1111.0,504.3 L1110.0,500.2 L1108.5,496.4 L1106.5,492.8 L1104.1,489.7 L1101.4,487.0 L1098.3,484.9 L1094.9,483.2 L1091.4,482.1 L1087.6,481.6 L1083.8,481.7 L1079.9,482.3 L1076.1,483.5 L1072.4,485.3 L1068.8,487.6 L1065.4,490.4 L1062.4,493.7 L1059.7,497.3 L1057.3,501.2 L1055.4,505.4 L1053.9,509.7 L1053.0,514.2 L1052.5,518.7 L1052.5,523.1 L1053.0,527.5 L1054.0,531.6 L1055.5,535.4 L1057.5,539.0 L1059.9,542.1 L1062.6,544.8 L1065.7,546.9 L1069.1,548.6 L1072.6,549.7 L1076.4,550.2 L1080.2,550.1 L1084.1,549.5 L1087.9,548.3 L1091.6,546.5 L1095.2,544.2 L1098.6,541.4 L1101.6,538.1 L1104.3,534.5 L1106.7,530.6Z" fill="#b3b3b3" fill-rule="evenodd" clip-path="url(#ah4)"/>
<ellipse cx="1082.0" cy="515.9" rx="28.6" ry="35.2" transform="rotate(21.6 1082.0 515.9)" fill="none" stroke="#444" stroke-width="0.5" clip-path="url(#ah4)"/>
<ellipse cx="1078.6" cy="516.5" rx="28.6" ry="35.2" transform="rotate(21.6 1078.6 516.5)" fill="none" stroke="#333" stroke-width="0.7" />
<ellipse cx="1137.5" cy="527.8" rx="100.2" ry="124.1" transform="rotate(21.6 1137.5 527.8)" fill="none" stroke="#dadada" stroke-width="7.6" />
<ellipse cx="1137.5" cy="527.8" rx="100.2" ry="124.1" transform="rotate(21.6 1137.5 527.8)" fill="none" stroke="url(#tga)" stroke-width="7.6" stroke-dasharray="1.2 1.6"/>
<ellipse cx="1137.5" cy="527.8" rx="104.0" ry="127.9" transform="rotate(21.6 1137.5 527.8)" fill="none" stroke="#555" stroke-width="0.4" />
<ellipse cx="1137.5" cy="527.8" rx="96.0" ry="119.9" transform="rotate(21.6 1137.5 527.8)" fill="none" stroke="#444" stroke-width="0.6" />
<ellipse cx="1137.5" cy="527.8" rx="91.5" ry="115.4" transform="rotate(21.6 1137.5 527.8)" fill="none" stroke="#555" stroke-width="0.5" />
<ellipse cx="1140.0" cy="530.2" rx="10.5" ry="12.5" transform="rotate(21.6 1140.0 530.2)" fill="#c8c8c8" stroke="#444" stroke-width="0.6" />
<ellipse cx="1327.7" cy="672.4" rx="99.5" ry="123.4" transform="rotate(21.6 1327.7 672.4)" fill="none" stroke="#b4b4b4" stroke-width="9" />
<ellipse cx="1327.7" cy="672.4" rx="100.2" ry="124.1" transform="rotate(21.6 1327.7 672.4)" fill="none" stroke="#383838" stroke-width="7.6" stroke-dasharray="1.4 1.6"/>
<path d="M1431.9,710.2 L1424.9,725.4 L1416.4,739.7 L1406.5,752.8 L1395.4,764.5 L1383.3,774.7 L1370.3,783.1 L1356.7,789.6 L1342.8,794.0 L1328.7,796.4 L1314.7,796.7 L1301.1,794.8 L1288.1,790.8 L1275.9,784.8 L1264.7,776.9 L1254.7,767.1 L1246.1,755.7 L1239.0,742.9 L1233.5,728.9 L1229.8,713.9 L1227.9,698.2 L1227.8,682.0 L1229.6,665.7 L1233.2,649.5 L1238.5,633.6 L1245.5,618.4 L1254.0,604.1 L1263.9,591.0 L1275.0,579.3 L1287.1,569.1 L1300.1,560.7 L1313.7,554.2 L1327.6,549.8 L1341.7,547.4 L1355.7,547.1 L1369.3,549.0 L1382.3,553.0 L1394.5,559.0 L1405.7,566.9 L1415.7,576.7 L1424.3,588.1 L1431.4,600.9 L1436.9,614.9 L1440.6,629.9 L1442.5,645.6 L1442.6,661.8 L1440.8,678.1 L1437.2,694.3Z M1342.6,621.5 L1344.1,617.2 L1345.0,612.7 L1345.5,608.2 L1345.5,603.8 L1345.0,599.4 L1344.0,595.3 L1342.5,591.5 L1340.5,587.9 L1338.1,584.8 L1335.4,582.1 L1332.3,580.0 L1328.9,578.3 L1325.4,577.2 L1321.6,576.7 L1317.8,576.8 L1313.9,577.4 L1310.1,578.6 L1306.4,580.4 L1302.8,582.7 L1299.4,585.5 L1296.4,588.8 L1293.7,592.4 L1291.3,596.3 L1289.4,600.5 L1287.9,604.8 L1287.0,609.3 L1286.5,613.8 L1286.5,618.2 L1287.0,622.6 L1288.0,626.7 L1289.5,630.5 L1291.5,634.1 L1293.9,637.2 L1296.6,639.9 L1299.7,642.0 L1303.1,643.7 L1306.6,644.8 L1310.4,645.3 L1314.2,645.2 L1318.1,644.6 L1321.9,643.4 L1325.6,641.6 L1329.2,639.3 L1332.6,636.5 L1335.6,633.2 L1338.3,629.6 L1340.7,625.7Z M1411.6,634.8 L1413.1,630.5 L1414.0,626.0 L1414.5,621.5 L1414.5,617.1 L1414.0,612.7 L1413.0,608.6 L1411.5,604.8 L1409.5,601.2 L1407.1,598.1 L1404.4,595.4 L1401.3,593.3 L1397.9,591.6 L1394.4,590.5 L1390.6,590.0 L1386.8,590.1 L1382.9,590.7 L1379.1,591.9 L1375.4,593.7 L1371.8,596.0 L1368.4,598.8 L1365.4,602.1 L1362.7,605.7 L1360.3,609.6 L1358.4,613.8 L1356.9,618.1 L1356.0,622.6 L1355.5,627.1 L1355.5,631.5 L1356.0,635.9 L1357.0,640.0 L1358.5,643.8 L1360.5,647.4 L1362.9,650.5 L1365.6,653.2 L1368.7,655.3 L1372.1,657.0 L1375.6,658.1 L1379.4,658.6 L1383.2,658.5 L1387.1,657.9 L1390.9,656.7 L1394.6,654.9 L1398.2,652.6 L1401.6,649.8 L1404.6,646.5 L1407.3,642.9 L1409.7,639.0Z M1409.9,714.8 L1411.4,710.5 L1412.3,706.0 L1412.8,701.5 L1412.8,697.1 L1412.3,692.7 L1411.3,688.6 L1409.8,684.8 L1407.8,681.2 L1405.4,678.1 L1402.7,675.4 L1399.6,673.3 L1396.2,671.6 L1392.7,670.5 L1388.9,670.0 L1385.1,670.1 L1381.2,670.7 L1377.4,671.9 L1373.7,673.7 L1370.1,676.0 L1366.7,678.8 L1363.7,682.1 L1361.0,685.7 L1358.6,689.6 L1356.7,693.8 L1355.2,698.1 L1354.3,702.6 L1353.8,707.1 L1353.8,711.5 L1354.3,715.9 L1355.3,720.0 L1356.8,723.8 L1358.8,727.4 L1361.2,730.5 L1363.9,733.2 L1367.0,735.3 L1370.4,737.0 L1373.9,738.1 L1377.7,738.6 L1381.5,738.5 L1385.4,737.9 L1389.2,736.7 L1392.9,734.9 L1396.5,732.6 L1399.9,729.8 L1402.9,726.5 L1405.6,722.9 L1408.0,719.0Z M1341.6,753.2 L1343.1,748.9 L1344.0,744.4 L1344.5,739.9 L1344.5,735.5 L1344.0,731.1 L1343.0,727.0 L1341.5,723.2 L1339.5,719.6 L1337.1,716.5 L1334.4,713.8 L1331.3,711.7 L1327.9,710.0 L1324.4,708.9 L1320.6,708.4 L1316.8,708.5 L1312.9,709.1 L1309.1,710.3 L1305.4,712.1 L1301.8,714.4 L1298.4,717.2 L1295.4,720.5 L1292.7,724.1 L1290.3,728.0 L1288.4,732.2 L1286.9,736.5 L1286.0,741.0 L1285.5,745.5 L1285.5,749.9 L1286.0,754.3 L1287.0,758.4 L1288.5,762.2 L1290.5,765.8 L1292.9,768.9 L1295.6,771.6 L1298.7,773.7 L1302.1,775.4 L1305.6,776.5 L1309.4,777.0 L1313.2,776.9 L1317.1,776.3 L1320.9,775.1 L1324.6,773.3 L1328.2,771.0 L1331.6,768.2 L1334.6,764.9 L1337.3,761.3 L1339.7,757.4Z M1299.9,693.2 L1301.4,688.9 L1302.3,684.4 L1302.8,679.9 L1302.8,675.5 L1302.3,671.1 L1301.3,667.0 L1299.8,663.2 L1297.8,659.6 L1295.4,656.5 L1292.7,653.8 L1289.6,651.7 L1286.2,650.0 L1282.7,648.9 L1278.9,648.4 L1275.1,648.5 L1271.2,649.1 L1267.4,650.3 L1263.7,652.1 L1260.1,654.4 L1256.7,657.2 L1253.7,660.5 L1251.0,664.1 L1248.6,668.0 L1246.7,672.2 L1245.2,676.5 L1244.3,681.0 L1243.8,685.5 L1243.8,689.9 L1244.3,694.3 L1245.3,698.4 L1246.8,702.2 L1248.8,705.8 L1251.2,708.9 L1253.9,711.6 L1257.0,713.7 L1260.4,715.4 L1263.9,716.5 L1267.7,717.0 L1271.5,716.9 L1275.4,716.3 L1279.2,715.1 L1282.9,713.3 L1286.5,711.0 L1289.9,708.2 L1292.9,704.9 L1295.6,701.3 L1298.0,697.4Z" fill="#c5c4c4" fill-rule="evenodd"/>
<path d="M1343.5,621.9 L1341.5,626.2 L1339.1,630.2 L1336.3,633.9 L1333.2,637.3 L1329.7,640.1 L1326.0,642.5 L1322.2,644.3 L1318.2,645.6 L1314.2,646.2 L1310.3,646.3 L1306.4,645.8 L1302.7,644.6 L1299.2,642.9 L1296.0,640.7 L1293.2,637.9 L1290.7,634.7 L1288.7,631.0 L1287.1,627.1 L1286.1,622.8 L1285.5,618.4 L1285.5,613.8 L1286.0,609.2 L1287.0,604.6 L1288.5,600.1 L1290.5,595.8 L1292.9,591.8 L1295.7,588.1 L1298.8,584.7 L1302.3,581.9 L1306.0,579.5 L1309.8,577.7 L1313.8,576.4 L1317.8,575.8 L1321.7,575.7 L1325.6,576.2 L1329.3,577.4 L1332.8,579.1 L1336.0,581.3 L1338.8,584.1 L1341.3,587.3 L1343.3,591.0 L1344.9,594.9 L1345.9,599.2 L1346.5,603.6 L1346.5,608.2 L1346.0,612.8 L1345.0,617.4Z M1346.0,620.9 L1347.5,616.6 L1348.4,612.1 L1348.9,607.6 L1348.9,603.2 L1348.4,598.8 L1347.4,594.7 L1345.9,590.9 L1343.9,587.3 L1341.5,584.2 L1338.8,581.5 L1335.7,579.4 L1332.3,577.7 L1328.8,576.6 L1325.0,576.1 L1321.2,576.2 L1317.3,576.8 L1313.5,578.0 L1309.8,579.8 L1306.2,582.1 L1302.8,584.9 L1299.8,588.2 L1297.1,591.8 L1294.7,595.7 L1292.8,599.9 L1291.3,604.2 L1290.4,608.7 L1289.9,613.2 L1289.9,617.6 L1290.4,622.0 L1291.4,626.1 L1292.9,629.9 L1294.9,633.5 L1297.3,636.6 L1300.0,639.3 L1303.1,641.4 L1306.5,643.1 L1310.0,644.2 L1313.8,644.7 L1317.6,644.6 L1321.5,644.0 L1325.3,642.8 L1329.0,641.0 L1332.6,638.7 L1336.0,635.9 L1339.0,632.6 L1341.7,629.0 L1344.1,625.1Z" fill="#b3b3b3" fill-rule="evenodd" clip-path="url(#ch0)"/>
<ellipse cx="1319.4" cy="610.4" rx="28.6" ry="35.2" transform="rotate(21.6 1319.4 610.4)" fill="none" stroke="#444" stroke-width="0.5" clip-path="url(#ch0)"/>
<ellipse cx="1316.0" cy="611.0" rx="28.6" ry="35.2" transform="rotate(21.6 1316.0 611.0)" fill="none" stroke="#333" stroke-width="0.7" />
<path d="M1412.5,635.2 L1410.5,639.5 L1408.1,643.5 L1405.3,647.2 L1402.2,650.6 L1398.7,653.4 L1395.0,655.8 L1391.2,657.6 L1387.2,658.9 L1383.2,659.5 L1379.3,659.6 L1375.4,659.1 L1371.7,657.9 L1368.2,656.2 L1365.0,654.0 L1362.2,651.2 L1359.7,648.0 L1357.7,644.3 L1356.1,640.4 L1355.1,636.1 L1354.5,631.7 L1354.5,627.1 L1355.0,622.5 L1356.0,617.9 L1357.5,613.4 L1359.5,609.1 L1361.9,605.1 L1364.7,601.4 L1367.8,598.0 L1371.3,595.2 L1375.0,592.8 L1378.8,591.0 L1382.8,589.7 L1386.8,589.1 L1390.7,589.0 L1394.6,589.5 L1398.3,590.7 L1401.8,592.4 L1405.0,594.6 L1407.8,597.4 L1410.3,600.6 L1412.3,604.3 L1413.9,608.2 L1414.9,612.5 L1415.5,616.9 L1415.5,621.5 L1415.0,626.1 L1414.0,630.7Z M1415.0,634.2 L1416.5,629.9 L1417.4,625.4 L1417.9,620.9 L1417.9,616.5 L1417.4,612.1 L1416.4,608.0 L1414.9,604.2 L1412.9,600.6 L1410.5,597.5 L1407.8,594.8 L1404.7,592.7 L1401.3,591.0 L1397.8,589.9 L1394.0,589.4 L1390.2,589.5 L1386.3,590.1 L1382.5,591.3 L1378.8,593.1 L1375.2,595.4 L1371.8,598.2 L1368.8,601.5 L1366.1,605.1 L1363.7,609.0 L1361.8,613.2 L1360.3,617.5 L1359.4,622.0 L1358.9,626.5 L1358.9,630.9 L1359.4,635.3 L1360.4,639.4 L1361.9,643.2 L1363.9,646.8 L1366.3,649.9 L1369.0,652.6 L1372.1,654.7 L1375.5,656.4 L1379.0,657.5 L1382.8,658.0 L1386.6,657.9 L1390.5,657.3 L1394.3,656.1 L1398.0,654.3 L1401.6,652.0 L1405.0,649.2 L1408.0,645.9 L1410.7,642.3 L1413.1,638.4Z" fill="#b3b3b3" fill-rule="evenodd" clip-path="url(#ch1)"/>
<ellipse cx="1388.4" cy="623.7" rx="28.6" ry="35.2" transform="rotate(21.6 1388.4 623.7)" fill="none" stroke="#444" stroke-width="0.5" clip-path="url(#ch1)"/>
<ellipse cx="1385.0" cy="624.3" rx="28.6" ry="35.2" transform="rotate(21.6 1385.0 624.3)" fill="none" stroke="#333" stroke-width="0.7" />
<path d="M1410.8,715.2 L1408.8,719.5 L1406.4,723.5 L1403.6,727.2 L1400.5,730.6 L1397.0,733.4 L1393.3,735.8 L1389.5,737.6 L1385.5,738.9 L1381.5,739.5 L1377.6,739.6 L1373.7,739.1 L1370.0,737.9 L1366.5,736.2 L1363.3,734.0 L1360.5,731.2 L1358.0,728.0 L1356.0,724.3 L1354.4,720.4 L1353.4,716.1 L1352.8,711.7 L1352.8,707.1 L1353.3,702.5 L1354.3,697.9 L1355.8,693.4 L1357.8,689.1 L1360.2,685.1 L1363.0,681.4 L1366.1,678.0 L1369.6,675.2 L1373.3,672.8 L1377.1,671.0 L1381.1,669.7 L1385.1,669.1 L1389.0,669.0 L1392.9,669.5 L1396.6,670.7 L1400.1,672.4 L1403.3,674.6 L1406.1,677.4 L1408.6,680.6 L1410.6,684.3 L1412.2,688.2 L1413.2,692.5 L1413.8,696.9 L1413.8,701.5 L1413.3,706.1 L1412.3,710.7Z M1413.3,714.2 L1414.8,709.9 L1415.7,705.4 L1416.2,700.9 L1416.2,696.5 L1415.7,692.1 L1414.7,688.0 L1413.2,684.2 L1411.2,680.6 L1408.8,677.5 L1406.1,674.8 L1403.0,672.7 L1399.6,671.0 L1396.1,669.9 L1392.3,669.4 L1388.5,669.5 L1384.6,670.1 L1380.8,671.3 L1377.1,673.1 L1373.5,675.4 L1370.1,678.2 L1367.1,681.5 L1364.4,685.1 L1362.0,689.0 L1360.1,693.2 L1358.6,697.5 L1357.7,702.0 L1357.2,706.5 L1357.2,710.9 L1357.7,715.3 L1358.7,719.4 L1360.2,723.2 L1362.2,726.8 L1364.6,729.9 L1367.3,732.6 L1370.4,734.7 L1373.8,736.4 L1377.3,737.5 L1381.1,738.0 L1384.9,737.9 L1388.8,737.3 L1392.6,736.1 L1396.3,734.3 L1399.9,732.0 L1403.3,729.2 L1406.3,725.9 L1409.0,722.3 L1411.4,718.4Z" fill="#b3b3b3" fill-rule="evenodd" clip-path="url(#ch2)"/>
<ellipse cx="1386.7" cy="703.7" rx="28.6" ry="35.2" transform="rotate(21.6 1386.7 703.7)" fill="none" stroke="#444" stroke-width="0.5" clip-path="url(#ch2)"/>
<ellipse cx="1383.3" cy="704.3" rx="28.6" ry="35.2" transform="rotate(21.6 1383.3 704.3)" fill="none" stroke="#333" stroke-width="0.7" />
<path d="M1342.5,753.6 L1340.5,757.9 L1338.1,761.9 L1335.3,765.6 L1332.2,769.0 L1328.7,771.8 L1325.0,774.2 L1321.2,776.0 L1317.2,777.3 L1313.2,777.9 L1309.3,778.0 L1305.4,777.5 L1301.7,776.3 L1298.2,774.6 L1295.0,772.4 L1292.2,769.6 L1289.7,766.4 L1287.7,762.7 L1286.1,758.8 L1285.1,754.5 L1284.5,750.1 L1284.5,745.5 L1285.0,740.9 L1286.0,736.3 L1287.5,731.8 L1289.5,727.5 L1291.9,723.5 L1294.7,719.8 L1297.8,716.4 L1301.3,713.6 L1305.0,711.2 L1308.8,709.4 L1312.8,708.1 L1316.8,707.5 L1320.7,707.4 L1324.6,707.9 L1328.3,709.1 L1331.8,710.8 L1335.0,713.0 L1337.8,715.8 L1340.3,719.0 L1342.3,722.7 L1343.9,726.6 L1344.9,730.9 L1345.5,735.3 L1345.5,739.9 L1345.0,744.5 L1344.0,749.1Z M1345.0,752.6 L1346.5,748.3 L1347.4,743.8 L1347.9,739.3 L1347.9,734.9 L1347.4,730.5 L1346.4,726.4 L1344.9,722.6 L1342.9,719.0 L1340.5,715.9 L1337.8,713.2 L1334.7,711.1 L1331.3,709.4 L1327.8,708.3 L1324.0,707.8 L1320.2,707.9 L1316.3,708.5 L1312.5,709.7 L1308.8,711.5 L1305.2,713.8 L1301.8,716.6 L1298.8,719.9 L1296.1,723.5 L1293.7,727.4 L1291.8,731.6 L1290.3,735.9 L1289.4,740.4 L1288.9,744.9 L1288.9,749.3 L1289.4,753.7 L1290.4,757.8 L1291.9,761.6 L1293.9,765.2 L1296.3,768.3 L1299.0,771.0 L1302.1,773.1 L1305.5,774.8 L1309.0,775.9 L1312.8,776.4 L1316.6,776.3 L1320.5,775.7 L1324.3,774.5 L1328.0,772.7 L1331.6,770.4 L1335.0,767.6 L1338.0,764.3 L1340.7,760.7 L1343.1,756.8Z" fill="#b3b3b3" fill-rule="evenodd" clip-path="url(#ch3)"/>
<ellipse cx="1318.4" cy="742.1" rx="28.6" ry="35.2" transform="rotate(21.6 1318.4 742.1)" fill="none" stroke="#444" stroke-width="0.5" clip-path="url(#ch3)"/>
<ellipse cx="1315.0" cy="742.7" rx="28.6" ry="35.2" transform="rotate(21.6 1315.0 742.7)" fill="none" stroke="#333" stroke-width="0.7" />
<path d="M1300.8,693.6 L1298.8,697.9 L1296.4,701.9 L1293.6,705.6 L1290.5,709.0 L1287.0,711.8 L1283.3,714.2 L1279.5,716.0 L1275.5,717.3 L1271.5,717.9 L1267.6,718.0 L1263.7,717.5 L1260.0,716.3 L1256.5,714.6 L1253.3,712.4 L1250.5,709.6 L1248.0,706.4 L1246.0,702.7 L1244.4,698.8 L1243.4,694.5 L1242.8,690.1 L1242.8,685.5 L1243.3,680.9 L1244.3,676.3 L1245.8,671.8 L1247.8,667.5 L1250.2,663.5 L1253.0,659.8 L1256.1,656.4 L1259.6,653.6 L1263.3,651.2 L1267.1,649.4 L1271.1,648.1 L1275.1,647.5 L1279.0,647.4 L1282.9,647.9 L1286.6,649.1 L1290.1,650.8 L1293.3,653.0 L1296.1,655.8 L1298.6,659.0 L1300.6,662.7 L1302.2,666.6 L1303.2,670.9 L1303.8,675.3 L1303.8,679.9 L1303.3,684.5 L1302.3,689.1Z M1303.3,692.6 L1304.8,688.3 L1305.7,683.8 L1306.2,679.3 L1306.2,674.9 L1305.7,670.5 L1304.7,666.4 L1303.2,662.6 L1301.2,659.0 L1298.8,655.9 L1296.1,653.2 L1293.0,651.1 L1289.6,649.4 L1286.1,648.3 L1282.3,647.8 L1278.5,647.9 L1274.6,648.5 L1270.8,649.7 L1267.1,651.5 L1263.5,653.8 L1260.1,656.6 L1257.1,659.9 L1254.4,663.5 L1252.0,667.4 L1250.1,671.6 L1248.6,675.9 L1247.7,680.4 L1247.2,684.9 L1247.2,689.3 L1247.7,693.7 L1248.7,697.8 L1250.2,701.6 L1252.2,705.2 L1254.6,708.3 L1257.3,711.0 L1260.4,713.1 L1263.8,714.8 L1267.3,715.9 L1271.1,716.4 L1274.9,716.3 L1278.8,715.7 L1282.6,714.5 L1286.3,712.7 L1289.9,710.4 L1293.3,707.6 L1296.3,704.3 L1299.0,700.7 L1301.4,696.8Z" fill="#b3b3b3" fill-rule="evenodd" clip-path="url(#ch4)"/>
<ellipse cx="1276.7" cy="682.1" rx="28.6" ry="35.2" transform="rotate(21.6 1276.7 682.1)" fill="none" stroke="#444" stroke-width="0.5" clip-path="url(#ch4)"/>
<ellipse cx="1273.3" cy="682.7" rx="28.6" ry="35.2" transform="rotate(21.6 1273.3 682.7)" fill="none" stroke="#333" stroke-width="0.7" />
<ellipse cx="1335.2" cy="671.9" rx="100.2" ry="124.1" transform="rotate(21.6 1335.2 671.9)" fill="none" stroke="#dadada" stroke-width="7.6" />
<ellipse cx="1335.2" cy="671.9" rx="100.2" ry="124.1" transform="rotate(21.6 1335.2 671.9)" fill="none" stroke="url(#tgc)" stroke-width="7.6" stroke-dasharray="1.2 1.6"/>
<ellipse cx="1335.2" cy="671.9" rx="104.0" ry="127.9" transform="rotate(21.6 1335.2 671.9)" fill="none" stroke="#555" stroke-width="0.4" />
<ellipse cx="1335.2" cy="671.9" rx="96.0" ry="119.9" transform="rotate(21.6 1335.2 671.9)" fill="none" stroke="#444" stroke-width="0.6" />
<ellipse cx="1335.2" cy="671.9" rx="91.5" ry="115.4" transform="rotate(21.6 1335.2 671.9)" fill="none" stroke="#555" stroke-width="0.5" />
<ellipse cx="1337.7" cy="674.3" rx="10.5" ry="12.5" transform="rotate(21.6 1337.7 674.3)" fill="#c8c8c8" stroke="#444" stroke-width="0.6" />
<polyline points="286.0,808.0 272.0,833.0" fill="none" stroke="#1f9a1f" stroke-width="1.2" stroke-linejoin="round" />
<polygon points="270.0,823.0 280.0,828.0 269.0,835.0" fill="#17a117" />
<polyline points="286.0,807.0 297.0,817.0" fill="none" stroke="#8a1020" stroke-width="1.2" stroke-linejoin="round" />
<ellipse cx="297.5" cy="813.5" rx="5.5" ry="7" transform="rotate(-30 297.5 813.5)" fill="#c01414"/>
<polygon points="294.0,819.0 304.0,813.0 306.0,822.0 297.0,822.0" fill="#1212aa" />
<polyline points="303.0,812.0 308.0,820.0" fill="none" stroke="#e03030" stroke-width="1" stroke-linejoin="round" />
<polyline points="307.0,812.0 302.0,820.0" fill="none" stroke="#e03030" stroke-width="1" stroke-linejoin="round" />
<text x="307" y="830" font-family="Liberation Sans, sans-serif" font-size="11" font-weight="bold" fill="#1a2fd0">Z</text>
<text x="262" y="842" font-family="Liberation Sans, sans-serif" font-size="11" font-weight="bold" fill="#22b022">Y</text>
</svg>
</div>
</body></html>
